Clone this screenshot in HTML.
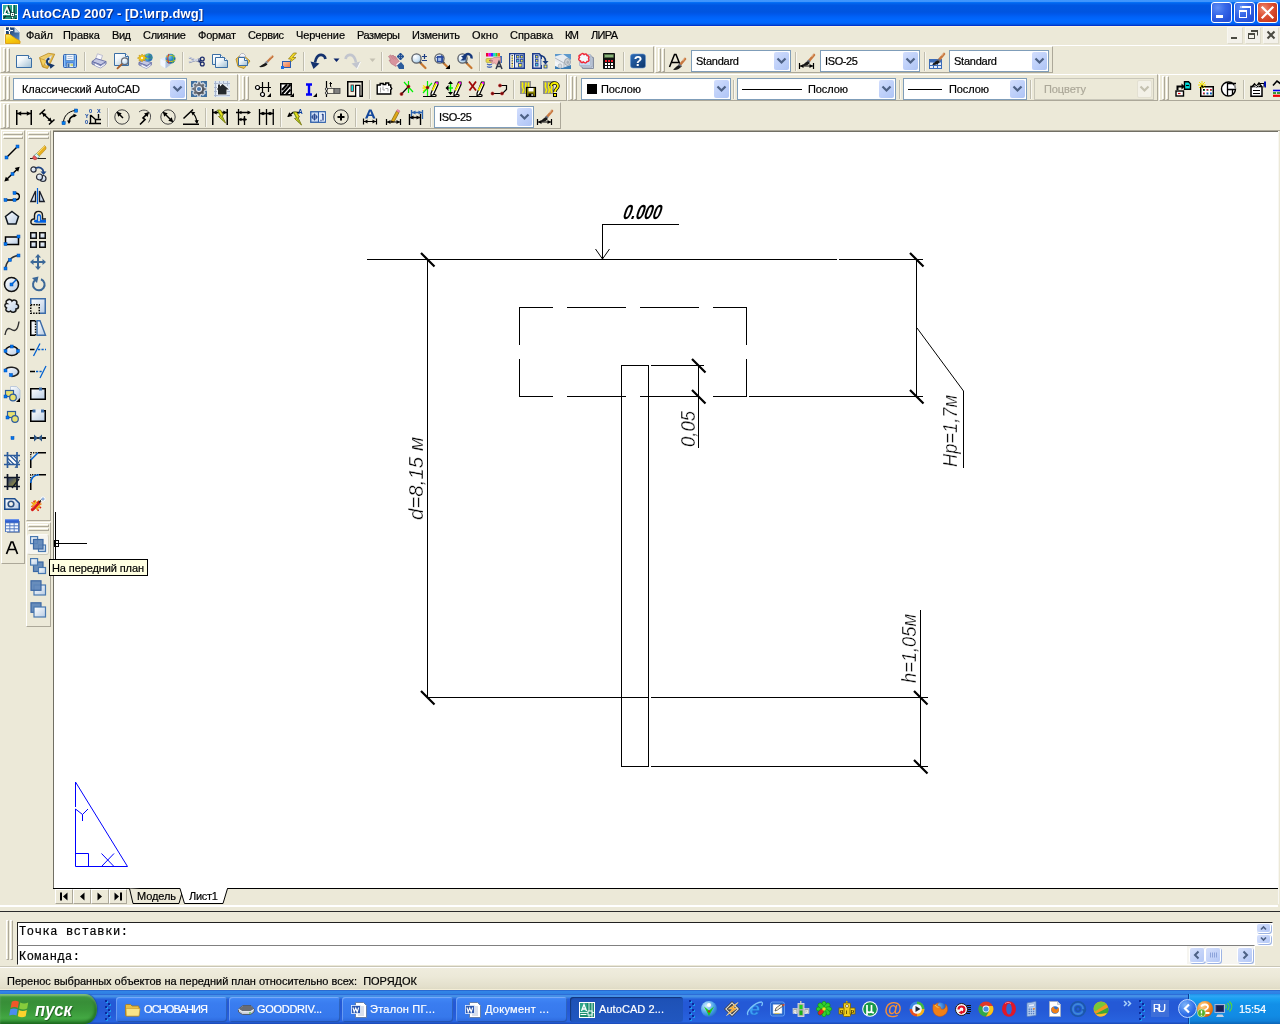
<!DOCTYPE html>
<html lang="ru"><head><meta charset="utf-8"><title>AutoCAD 2007 - [D:\игр.dwg]</title>
<style>
html,body{margin:0;padding:0}
body{width:1280px;height:1024px;overflow:hidden;position:relative;will-change:transform;background:#ECE9D8;font-family:"Liberation Sans",sans-serif;font-size:11px;color:#000}
div,svg.i,span.t,svg.a{position:absolute;box-sizing:border-box}
span.t{white-space:pre;display:block}
svg{overflow:visible}
.tb{border-left:1px solid #fff;border-top:1px solid #fff;border-right:1px solid #ACA899;border-bottom:1px solid #ACA899}
.tbv{border-left:1px solid #fff;border-top:1px solid #fff;border-right:1px solid #ACA899;border-bottom:1px solid #ACA899}
.gr{width:3px;border-left:1px solid #fff;border-top:1px solid #fff;border-right:1px solid #ACA899;border-bottom:1px solid #ACA899}
.gh{height:3px;border-left:1px solid #fff;border-top:1px solid #fff;border-right:1px solid #ACA899;border-bottom:1px solid #ACA899}
.sep{width:2px;border-left:1px solid #C0BDAE;border-right:1px solid #F8F7F1}
.cb{background:#fff;border:1px solid #7F9DB9}
.cbb{border-radius:2px;background:linear-gradient(135deg,#D3DEFD 0%,#C1D2FA 45%,#AEC4F5 100%)}
.cbd{background:#ECE9D8;border:1px solid #C9C7BA}
.cbbd{border-radius:2px;background:#F3F1E8;border:1px solid #E3E0D2}
.tk{border-radius:3px;background:linear-gradient(#4A90F8 0%,#3F84F4 10%,#3A7DF0 25%,#3678EC 80%,#2C68DC 100%);box-shadow:inset 1px 1px 0 rgba(255,255,255,.25),inset -1px -1px 0 rgba(0,0,0,.2)}
.tka{border-radius:3px;background:linear-gradient(#1B4FB8 0%,#1E52B7 15%,#2157C0 100%);box-shadow:inset 1px 1px 1px rgba(0,0,0,.35)}
</style></head><body>
<svg width="0" height="0" style="position:absolute"><defs>
<linearGradient id="gp" x1="0" y1="0" x2="1" y2="1"><stop offset="0" stop-color="#fff"/><stop offset=".35" stop-color="#F2F7FA"/><stop offset="1" stop-color="#9EBDD2"/></linearGradient>
<linearGradient id="gy" x1="0" y1="0" x2="1" y2="1"><stop offset="0" stop-color="#F8E088"/><stop offset="1" stop-color="#D8A020"/></linearGradient>
<radialGradient id="gl" cx=".35" cy=".3" r=".8"><stop offset="0" stop-color="#fff"/><stop offset=".6" stop-color="#CFE4F4"/><stop offset="1" stop-color="#8CB8DC"/></radialGradient>
<radialGradient id="gg" cx=".35" cy=".3" r=".8"><stop offset="0" stop-color="#7CD0F0"/><stop offset=".5" stop-color="#2C84C8"/><stop offset="1" stop-color="#144C8C"/></radialGradient>
<linearGradient id="go" x1="0" y1="0" x2="1" y2="1"><stop offset="0" stop-color="#F8C8B0"/><stop offset="1" stop-color="#F07038"/></linearGradient>
<linearGradient id="gh" x1="0" y1="0" x2="1" y2="1"><stop offset="0" stop-color="#2C6CB8"/><stop offset="1" stop-color="#0C3468"/></linearGradient>
<linearGradient id="gb" x1="0" y1="0" x2="1" y2="1"><stop offset="0" stop-color="#fff"/><stop offset="1" stop-color="#B8CCE4"/></linearGradient>
<linearGradient id="gd" x1="0" y1="0" x2="1" y2="1"><stop offset="0" stop-color="#7C9CCC"/><stop offset="1" stop-color="#4C74B0"/></linearGradient>
</defs></svg>
<div style="left:0px;top:0px;width:1280px;height:26px;background:linear-gradient(to bottom,#4097FD 0px,#3F94FC 1.500px,#0874F8 2.200px,#0068F0 3px,#045FE8 4px,#0057E2 5.500px,#0055E0 12px,#0058EA 14px,#0062F8 17px,#0068FF 20px,#0066FC 23px,#0054E0 24.500px,#0036D0 25.300px,#0030C8 26px)"></div><div style="left:0px;top:26px;width:1280px;height:1px;background:#FAF3DE"></div><svg class="i" style="left:2px;top:4px" width="16" height="16" viewBox="0 0 16 16"><defs><linearGradient id="gteal" x1="0" y1="0" x2="1" y2="1"><stop offset="0" stop-color="#38B8A0"/><stop offset="1" stop-color="#147860"/></linearGradient><linearGradient id="gnavy" x1="0" y1="0" x2="1" y2="1"><stop offset="0" stop-color="#16305C"/><stop offset="1" stop-color="#5890CC"/></linearGradient></defs><rect x=".5" y=".5" width="15" height="15" fill="url(#gteal)" stroke="#fff"/><path d="M10.500 1v14M1 10.500h14" stroke="#fff" stroke-width="1"/><path d="M12.500 1v8M1 12.500h7" stroke="#0C5040" stroke-width=".8"/><path d="M3 9.500L5.500 3.500 8 9.500" fill="none" stroke="#103028" stroke-width="1.600" transform="translate(.8 -.6)"/><path d="M2.500 9.500L5 3.500l2.500 6" fill="none" stroke="#fff" stroke-width="1.500"/><path d="M2 9.500h3" stroke="#fff"/><rect x="8.500" y="8.500" width="4" height="4" fill="#fff" stroke="#0C4034" stroke-width=".8"/><rect x="10" y="10" width="1.200" height="1.200" fill="#0C4034"/><path d="M1.500 14.500l2.500-2.500M9 14.500h1.500M13 14.500h1.500" stroke="#0C3028" stroke-width="1.200"/></svg><span class="t" style="left:22px;top:5px;line-height:17px;font-family:'Liberation Sans',sans-serif;font-size:13px;font-weight:bold;letter-spacing:0.085px;color:#fff;text-shadow:1px 1px 0 #0A2A80;">AutoCAD 2007 - [D:\игр.dwg]</span><div style="left:1211px;top:2px;width:21px;height:21px;border:1px solid #fff;border-radius:3px;background:radial-gradient(circle at 30% 25%,#5F8EF5 0%,#3667E8 40%,#2450D8 80%,#2B5BE0 100%)"></div><div style="left:1234px;top:2px;width:21px;height:21px;border:1px solid #fff;border-radius:3px;background:radial-gradient(circle at 30% 25%,#5F8EF5 0%,#3667E8 40%,#2450D8 80%,#2B5BE0 100%)"></div><div style="left:1257px;top:2px;width:21px;height:21px;border:1px solid #fff;border-radius:3px;background:radial-gradient(circle at 30% 30%,#EC8E72 0%,#E0573A 35%,#C9391C 80%,#B8321A 100%)"></div><svg class="a" style="left:1211px;top:2px" width="68" height="21" viewBox="0 0 68 21"><rect x="5" y="13" width="7" height="3" fill="#fff"/><path d="M31.5 5.5h8v7M29 5h11" fill="none" stroke="#fff" stroke-width="1"/><rect x="31" y="4" width="9" height="2" fill="#fff"/><rect x="28.500" y="9.500" width="7" height="6" fill="none" stroke="#fff"/><rect x="28" y="8" width="8" height="2" fill="#fff"/><path d="M51.500 5.500l10 10M61.500 5.500l-10 10" stroke="#fff" stroke-width="2.200" stroke-linecap="square"/></svg><svg class="i" style="left:5px;top:27px" width="16" height="17" viewBox="0 0 16 17"><rect x="-1" y="0" width="16" height="17" fill="#F8F7F0"/><path d="M1 .5h8.500l5 5v8H1z" fill="url(#gnavy)"/><path d="M9.500 .5l5 5h-5z" fill="#C4D8EC"/><path d="M1 .5h5v6H1z" fill="#1C4478"/><path d="M4.500 0v7M0 3.500h8" stroke="#fff" stroke-width="1.100"/><circle cx="4.500" cy="3.500" r="1.300" fill="#fff"/><circle cx="4.500" cy="3.500" r=".6" fill="#1C4478"/><path d="M.5 7.500H5l2 1.500 1.500 1 2 1.500 2 1 2.500 1.500v2.500H.5z" fill="url(#gyel)" stroke="#D89810" stroke-width=".9"/><defs><linearGradient id="gyel" x1="0" y1="0" x2=".6" y2="1"><stop offset="0" stop-color="#FCEC80"/><stop offset=".5" stop-color="#F8D010"/><stop offset="1" stop-color="#F0B808"/></linearGradient></defs></svg><span class="t" style="left:26px;top:28px;line-height:14px;font-family:'Liberation Sans',sans-serif;font-size:11px;font-weight:normal;letter-spacing:-0.016px;-webkit-text-stroke:.2px;">Файл</span><span class="t" style="left:63px;top:28px;line-height:14px;font-family:'Liberation Sans',sans-serif;font-size:11px;font-weight:normal;letter-spacing:-0.034px;-webkit-text-stroke:.2px;">Правка</span><span class="t" style="left:112px;top:28px;line-height:14px;font-family:'Liberation Sans',sans-serif;font-size:11px;font-weight:normal;letter-spacing:-0.453px;-webkit-text-stroke:.2px;">Вид</span><span class="t" style="left:143px;top:28px;line-height:14px;font-family:'Liberation Sans',sans-serif;font-size:11px;font-weight:normal;letter-spacing:-0.302px;-webkit-text-stroke:.2px;">Слияние</span><span class="t" style="left:198px;top:28px;line-height:14px;font-family:'Liberation Sans',sans-serif;font-size:11px;font-weight:normal;letter-spacing:-0.216px;-webkit-text-stroke:.2px;">Формат</span><span class="t" style="left:248px;top:28px;line-height:14px;font-family:'Liberation Sans',sans-serif;font-size:11px;font-weight:normal;letter-spacing:-0.334px;-webkit-text-stroke:.2px;">Сервис</span><span class="t" style="left:296px;top:28px;line-height:14px;font-family:'Liberation Sans',sans-serif;font-size:11px;font-weight:normal;letter-spacing:-0.074px;-webkit-text-stroke:.2px;">Черчение</span><span class="t" style="left:357px;top:28px;line-height:14px;font-family:'Liberation Sans',sans-serif;font-size:11px;font-weight:normal;letter-spacing:-0.453px;-webkit-text-stroke:.2px;">Размеры</span><span class="t" style="left:412px;top:28px;line-height:14px;font-family:'Liberation Sans',sans-serif;font-size:11px;font-weight:normal;letter-spacing:-0.232px;-webkit-text-stroke:.2px;">Изменить</span><span class="t" style="left:472px;top:28px;line-height:14px;font-family:'Liberation Sans',sans-serif;font-size:11px;font-weight:normal;letter-spacing:0.146px;-webkit-text-stroke:.2px;">Окно</span><span class="t" style="left:510px;top:28px;line-height:14px;font-family:'Liberation Sans',sans-serif;font-size:11px;font-weight:normal;letter-spacing:-0.026px;-webkit-text-stroke:.2px;">Справка</span><span class="t" style="left:565px;top:28px;line-height:14px;font-family:'Liberation Sans',sans-serif;font-size:11px;font-weight:normal;letter-spacing:-1.578px;-webkit-text-stroke:.2px;">КМ</span><span class="t" style="left:591px;top:28px;line-height:14px;font-family:'Liberation Sans',sans-serif;font-size:11px;font-weight:normal;letter-spacing:-0.693px;-webkit-text-stroke:.2px;">ЛИРА</span><div style="left:1227px;top:27px;width:16px;height:17px;background:#F3F1EA;border:1px solid #F8F7F2;border-right-color:#DDDACB;border-bottom-color:#DDDACB"></div><div style="left:1245px;top:27px;width:16px;height:17px;background:#F3F1EA;border:1px solid #F8F7F2;border-right-color:#DDDACB;border-bottom-color:#DDDACB"></div><div style="left:1263px;top:27px;width:16px;height:17px;background:#F3F1EA;border:1px solid #F8F7F2;border-right-color:#DDDACB;border-bottom-color:#DDDACB"></div><svg class="a" style="left:1227px;top:27px" width="52" height="17" viewBox="0 0 52 17"><rect x="4" y="10" width="6" height="2" fill="#4A4A42"/><path d="M24.500 3.500h6v5" fill="none" stroke="#4A4A42"/><rect x="24" y="3" width="7" height="2" fill="#4A4A42"/><rect x="21.500" y="6.500" width="6" height="5" fill="none" stroke="#4A4A42"/><rect x="21" y="6" width="7" height="2" fill="#4A4A42"/><path d="M40.500 4.500l7 7M47.500 4.500l-7 7" stroke="#4A4A42" stroke-width="2"/></svg><div style="left:0px;top:45px;width:1280px;height:1px;background:#fff"></div><div style="left:0px;top:74px;width:1280px;height:1px;background:#fff"></div><div class="tb" style="left:0px;top:46px;width:654px;height:27px;"></div><div class="gr" style="left:3px;top:48px;width:3px;height:24px;"></div><div class="gr" style="left:7px;top:48px;width:3px;height:24px;"></div><svg class="i" style="left:16px;top:53px" width="16" height="16" viewBox="0 0 16 16"><path d="M.5 2.500h12l3 3v9H.5z" fill="url(#gp)" stroke="#3A6EA5"/><path d="M12.500 2.500v3h3" fill="#fff" stroke="#3A6EA5"/></svg><svg class="i" style="left:39px;top:53px" width="16" height="16" viewBox="0 0 16 16"><path d="M.5 4.500L9.500 .3 15.700 1.200 12 9 8.500 15.500 3.500 14z" fill="url(#gy)" stroke="#B8861C" stroke-width=".8"/><path d="M3 8L13 2.500 8 12.500z" fill="#F4F8FC" stroke="#B8C8D8" stroke-width=".5"/><path d="M1 5.500l3 8.500 3.500-6.500z" fill="#F4D060" stroke="#B8861C" stroke-width=".6"/><path d="M10.500 5.500c-3.500 1-3.500 5 .5 7" fill="none" stroke="#17386B" stroke-width="1.900"/><path d="M9.500 10l6.300 2.200-4.300 3.600z" fill="#17386B"/></svg><svg class="i" style="left:62px;top:53px" width="16" height="16" viewBox="0 0 16 16"><rect x="1.500" y="1.500" width="13" height="13" rx="1" fill="#5B9BE8" stroke="#2F5FB0"/><rect x="2.500" y="2.500" width="11" height="11" fill="none" stroke="#8CC0F8" stroke-width="1"/><rect x="4" y="1.500" width="8" height="6" fill="#F4F8FF" stroke="#3A6EA5" stroke-width=".6"/><path d="M5.500 3.500h5M5.500 5.500h5" stroke="#9FB8D8" stroke-width=".8"/><rect x="4.500" y="10" width="7" height="4.500" fill="#E8EEF4" stroke="#2F5FB0" stroke-width=".6"/><rect x="5.500" y="10.500" width="2" height="3.500" fill="#3A6EA5"/><rect x="8.500" y="11" width="2.500" height="2" fill="#C8D878"/></svg><div class="sep" style="left:84px;top:52px;width:2px;height:19px;"></div><svg class="i" style="left:91px;top:53px" width="16" height="16" viewBox="0 0 16 16"><path d="M4.500 6L6.500 .8l5 1.700L10 7z" fill="#F8F8FC" stroke="#A8A8C4" stroke-width=".7"/><path d="M1 8.500L5 5.500l10 3-3 4z" fill="#C4C8E4" stroke="#5C64A0" stroke-width=".8"/><path d="M1 8.500l8.500 3.500v2.500L1 11zM9.500 12l5.500-3.500v2.500l-5.500 3.500z" fill="#A4AAD0" stroke="#5C64A0" stroke-width=".8"/><path d="M3 11l1.500 2 5 2 4.500-3 1-2.500-5.500 3.500-5-2.500z" fill="#fff" stroke="#8088B8" stroke-width=".6"/></svg><svg class="i" style="left:114px;top:53px" width="16" height="16" viewBox="0 0 16 16"><path d="M.5 .5h11l3 3v9H.5z" fill="url(#gp)" stroke="#3A6EA5"/><path d="M11.500 .5v3h3" fill="#fff" stroke="#3A6EA5"/><path d="M8.500 10.500L3.500 15.300" stroke="#A8602C" stroke-width="1.800" stroke-linecap="round"/><circle cx="10.800" cy="8.200" r="3.300" fill="url(#gl)" stroke="#6A6E78" stroke-width="1.200"/></svg><svg class="i" style="left:137px;top:53px" width="16" height="16" viewBox="0 0 16 16"><g transform="translate(1 2) scale(.9)"><path d="M4.500 6L6.500 .8l5 1.700L10 7z" fill="#F8F8FC" stroke="#A8A8C4" stroke-width=".7"/><path d="M1 8.500L5 5.500l10 3-3 4z" fill="#C4C8E4" stroke="#5C64A0" stroke-width=".8"/><path d="M1 8.500l8.500 3.500v2.500L1 11zM9.500 12l5.500-3.500v2.500l-5.500 3.500z" fill="#A4AAD0" stroke="#5C64A0" stroke-width=".8"/><path d="M3 11l1.500 2 5 2 4.500-3 1-2.500-5.500 3.500-5-2.500z" fill="#fff" stroke="#8088B8" stroke-width=".6"/></g><circle cx="11.500" cy="4.500" r="4" fill="#3C8ED8"/><path d="M9 2.500c2-1.500 4-1 5.500 1M8 5c3 1.500 5 1 7.500-.5" fill="none" stroke="#6CD06C" stroke-width="1.200"/><path d="M11.500 .5a4 4 0 0 1 0 8" fill="#1E5C9A" opacity=".55"/><path d="M4 .5l1.200 1.500 2-.8-.4 2 2 1-2 1 .4 2-2-.8L4 8.500 3 6.800l-2 .8.400-2-2-1 2-1-.4-2 2 .8z" transform="translate(1 .5)" fill="#F0C418" stroke="#B88C08" stroke-width=".5"/><circle cx="5" cy="5" r="1" fill="#fff"/></svg><svg class="i" style="left:160px;top:53px" width="16" height="16" viewBox="0 0 16 16"><path d="M.5 6l5-2 5 2v6l-5 3.500-5-3.500z" fill="#E4ECF8"/><path d="M.5 6l5 2.500v7L.5 12z" fill="#F4F8FF"/><path d="M5.500 8.500l5-2.500v6l-5 3.500z" fill="#B4C4DC"/><circle cx="10.500" cy="5.800" r="5" fill="url(#gg)"/><path d="M6 4c3-2 6-2 9 0M5.800 7.500c3 1.500 6.500 1.500 9.500-.5" fill="none" stroke="#E8C818" stroke-width="1"/><path d="M9 1c-1.500 3-1.500 6.500 0 9.500" fill="none" stroke="#D83828" stroke-width="1.100"/><path d="M12.500 1.200c1.500 3 1.500 6 0 9" fill="none" stroke="#58C050" stroke-width="1"/></svg><div class="sep" style="left:182px;top:52px;width:2px;height:19px;"></div><svg class="i" style="left:189px;top:53px" width="16" height="16" viewBox="0 0 16 16"><path d="M0 4.500l12 5M0 9.500l12-4" stroke="#7C86A8" stroke-width="1.800"/><path d="M0 4.300l9 3.500M0 9.200l9-2.800" stroke="#F0F2FA" stroke-width=".8"/><circle cx="13.300" cy="6" r="1.900" fill="none" stroke="#1C2C6C" stroke-width="1.300"/><circle cx="13.300" cy="11" r="1.900" fill="none" stroke="#1C2C6C" stroke-width="1.300"/><path d="M9.500 7.500l2.500 2.200M10 8.800l2-1.800" stroke="#1C2C6C" stroke-width="1.300"/></svg><svg class="i" style="left:212px;top:53px" width="16" height="16" viewBox="0 0 16 16"><path d="M.5 1.500h8l3 3v7H.5z" fill="url(#gp)" stroke="#3A6EA5"/><path d="M8.500 1.500v3h3" fill="#fff" stroke="#3A6EA5"/><path d="M3.500 4.500h9l3 3v7h-12z" fill="url(#gp)" stroke="#3A6EA5"/><path d="M12.500 4.500v3h3" fill="#fff" stroke="#3A6EA5"/></svg><svg class="i" style="left:235px;top:53px" width="16" height="16" viewBox="0 0 16 16"><path d="M1 6l6-5 8 7-6 7.500-6-2z" fill="#E8C458" stroke="#B8902C" stroke-width="1"/><path d="M4.500 2.500l2-2h2l2 2-.5 1.500h-5z" fill="#F4F4F8" stroke="#A0A4B4" stroke-width=".7"/><path d="M3.500 4.500h6l3 3v5h-9z" fill="url(#gp)" stroke="#3A6EA5"/><path d="M9.500 4.500v3h3" fill="#fff" stroke="#3A6EA5"/></svg><svg class="i" style="left:258px;top:53px" width="16" height="16" viewBox="0 0 16 16"><path d="M14.500 3.500L8 10" stroke="#C87840" stroke-width="2.200" stroke-linecap="round"/><path d="M14 2.800L12 4.800" stroke="#E8B088" stroke-width="1"/><path d="M9.500 8.500L7 11" stroke="#8890A0" stroke-width="2.400"/><path d="M8 10c-1 0-3.500 1.500-7 4 3 .5 6.500-.5 8.500-2.500z" fill="#181818"/></svg><svg class="i" style="left:281px;top:53px" width="16" height="16" viewBox="0 0 16 16"><path d="M12.500 0l-5 6h3l-3.500 5 8-6.500h-3.500l4-4.500z" fill="#F4DC28" stroke="#8C7408" stroke-width=".7"/><rect x="1.500" y="8.500" width="8" height="6" fill="url(#go)" stroke="#2C5CB0"/><rect x="0" y="13" width="3" height="3" fill="#1C6CE0"/></svg><div class="sep" style="left:303px;top:52px;width:2px;height:19px;"></div><svg class="i" style="left:310px;top:53px" width="16" height="16" viewBox="0 0 16 16"><path d="M15.500 6c-1-5-7-6-9.500 0l-1 3.500" fill="none" stroke="#14326E" stroke-width="2.600"/><path d="M.5 8.500l9 2-6 5.500z" fill="#14326E"/></svg><svg class="i" style="left:345px;top:53px" width="16" height="16" viewBox="0 0 16 16"><path d="M.5 6c1-5 7-6 9.500 0l1 3.500" fill="none" stroke="#C2C5CE" stroke-width="2.600"/><path d="M15.500 8.500l-9 2 6 5.500z" fill="#C2C5CE"/><path d="M12 16l3.500-7" stroke="#fff" stroke-width="1"/></svg><div class="sep" style="left:381px;top:52px;width:2px;height:19px;"></div><svg class="i" style="left:388px;top:53px" width="16" height="16" viewBox="0 0 16 16"><path d="M12.500 .5v6M9.500 3.500h6M12.500 0l-1.500 1.800h3zM12.500 7l-1.500-1.800h3zM9 3.500l1.800-1.500v3zM16 3.500l-1.800-1.500v3z" fill="#1E4E94" stroke="#1E4E94" stroke-width="1"/><path d="M.5 3.500l2-1.500 1.500 1 1-1 1.500 1.500.5-.5 5 6.500-4 4-5-3-2-3.500 2 0z" fill="#D8949E" stroke="#B4707C" stroke-width=".6"/><path d="M2.500 2.500l3 4M4.500 2.500l3 4M6.500 3.500l2.500 3" stroke="#B4707C" stroke-width=".5"/><path d="M8.500 12l3.500-3" stroke="#F4F4FA" stroke-width="1.300"/><path d="M9 12.500l4-3.500 3 3.500v3.500h-5z" fill="#2C5C9C"/></svg><svg class="i" style="left:411px;top:53px" width="16" height="16" viewBox="0 0 16 16"><path d="M8.500 9l6 6" stroke="#C87830" stroke-width="2.200" stroke-linecap="round"/><path d="M8.300 8.300l2 2" stroke="#50545C" stroke-width="2"/><circle cx="5.500" cy="5.500" r="4.600" fill="url(#gl)" stroke="#5C6068" stroke-width="1.300"/><path d="M11 3.500h5M13.500 1v5M11 7.500h5" stroke="#1E3E84" stroke-width="1.200"/></svg><svg class="i" style="left:434px;top:53px" width="16" height="16" viewBox="0 0 16 16"><path d="M8.500 9l6 6" stroke="#C87830" stroke-width="2.200" stroke-linecap="round"/><path d="M8.300 8.300l2 2" stroke="#50545C" stroke-width="2"/><circle cx="5.500" cy="5.500" r="4.600" fill="url(#gl)" stroke="#5C6068" stroke-width="1.300"/><rect x="3.500" y="3.500" width="5" height="5" fill="#A8C0E8" stroke="#2C4CA0" stroke-width="1.200"/><path d="M2 4.500h8M7.500 2v8" stroke="#2C4CA0" stroke-width=".8"/><path d="M16 11.500v4.500h-4.500z" fill="#000"/></svg><svg class="i" style="left:457px;top:53px" width="16" height="16" viewBox="0 0 16 16"><path d="M8.500 9l6 6" stroke="#C87830" stroke-width="2.200" stroke-linecap="round"/><path d="M8.300 8.300l2 2" stroke="#50545C" stroke-width="2"/><circle cx="5.500" cy="5.500" r="4.600" fill="url(#gl)" stroke="#5C6068" stroke-width="1.300"/><path d="M14.500 5.500c.5-4-3-5.500-6-3.500l-2 2" fill="none" stroke="#16387C" stroke-width="2.400"/><path d="M4 3l5.500-.5-1 5.500z" fill="#16387C"/><path d="M3.500 7.500h4v-4" fill="#16387C"/></svg><div class="sep" style="left:479px;top:52px;width:2px;height:19px;"></div><svg class="i" style="left:486px;top:53px" width="16" height="16" viewBox="0 0 16 16"><rect x="0" y="0" width="2.500" height="3.500" fill="#F00038"/><rect x="2.500" y="0" width="2.500" height="3.500" fill="#E800E8"/><rect x="5" y="0" width="2" height="3.500" fill="#3838F8"/><rect x="7" y="0" width="2.500" height="3.500" fill="#18D8D8"/><rect x="9.500" y="0" width="2" height="3.500" fill="#28D828"/><rect x="11.500" y="0" width="2.500" height="3.500" fill="#F86818"/><rect x="0" y="5.500" width="6" height="4" rx="1" fill="#E8D848" stroke="#A8A030" stroke-width=".6"/><path d="M1 11q2.500 1.500 5 0M1 13.500q2.500 1.500 5 0" fill="none" stroke="#4868B8" stroke-width="1.300"/><rect x="14" y="3" width="2" height="7" fill="#3C6CB8"/><path d="M3 7.500l5-3 6.500 0v5l-4 2-2-1.500-2 .5-1-1.500z" fill="#F0B0B0" stroke="#B87880" stroke-width=".6"/><path d="M3 7.500l4 .5" stroke="#805058" stroke-width=".8"/><path d="M10 16l3-7.500 3 7.500M11 13.500h4" fill="none" stroke="#303848" stroke-width="1.500"/></svg><svg class="i" style="left:509px;top:53px" width="16" height="16" viewBox="0 0 16 16"><rect x=".75" y=".75" width="14.500" height="14.500" fill="#DCE4F0" stroke="#1C3C8C" stroke-width="1.500"/><rect x="1.500" y="1.500" width="3.500" height="13" fill="#fff"/><path d="M3.200 2v12" stroke="#202020" stroke-width="1.200" stroke-dasharray="1.200 1.400"/><path d="M3.200 3.200v12" stroke="#E8D020" stroke-width="1.200" stroke-dasharray="1.200 1.400"/><path d="M5.500 1v14" stroke="#1C3C8C" stroke-width="1"/><rect x="7.5" y="2.5" width="2.5" height="2.5" fill="#E8E048" stroke="#2C4C9C" stroke-width=".9"/><rect x="11.5" y="2.5" width="2.5" height="2.5" fill="#E8E048" stroke="#2C4C9C" stroke-width=".9"/><rect x="7.5" y="6.5" width="2.5" height="2.5" fill="#48D8D8" stroke="#2C4C9C" stroke-width=".9"/><rect x="11.5" y="6.5" width="2.5" height="2.5" fill="#E8E048" stroke="#2C4C9C" stroke-width=".9"/><rect x="9.5" y="10.5" width="3.5" height="3.5" fill="#F0E848" stroke="#2C4C9C" stroke-width=".9"/></svg><svg class="i" style="left:532px;top:53px" width="16" height="16" viewBox="0 0 16 16"><path d="M.75 .75h6.500l2 2v12.500h-8.500z" fill="#DCE4F0" stroke="#1C3C8C" stroke-width="1.500"/><rect x="3.5" y="2.5" width="2.5" height="2.5" fill="#E8E048" stroke="#2C4C9C" stroke-width=".9"/><rect x="3.5" y="6.5" width="2.5" height="2.5" fill="#E8E048" stroke="#2C4C9C" stroke-width=".9"/><rect x="3.5" y="10.5" width="2.5" height="2.5" fill="#48D8D8" stroke="#2C4C9C" stroke-width=".9"/><path d="M9.500 6v6" stroke="#A8B8D0" stroke-width="1"/><path d="M7.500 2.500c4 0 6 2 6 6" fill="none" stroke="#16387C" stroke-width="1.600"/><path d="M10.500 8h6l-3 3.500z" fill="#16387C"/><rect x="12" y="12" width="3" height="3" fill="#F0E848" stroke="#2C4C9C" stroke-width=".9"/></svg><svg class="i" style="left:555px;top:53px" width="16" height="16" viewBox="0 0 16 16"><rect x="0" y="1" width="16" height="15" fill="#5C98CC"/><path d="M0 13l16-3v6H0z" fill="#3C7CB4"/><path d="M0 3.500L8 1l8 6v5l-9 3-7-3z" fill="#E8ECF0"/><path d="M0 5l9 5v4" fill="none" stroke="#B0B8C0" stroke-width="1"/><ellipse cx="12.500" cy="9" rx="3" ry="3.500" fill="#D0D4D8" stroke="#9098A0" stroke-width=".8"/><ellipse cx="12.800" cy="9.200" rx="1.300" ry="1.700" fill="#A8B0B8"/><path d="M0 8l6 3.500v4L0 13z" fill="#F4F6F8"/><ellipse cx="5" cy="13" rx="1.800" ry="2.200" fill="#D8DCE0" stroke="#A0A8B0" stroke-width=".6"/></svg><svg class="i" style="left:578px;top:53px" width="16" height="16" viewBox="0 0 16 16"><path d="M4.500 4.500h11v11h-11z" fill="#C8D4E8" stroke="#8890A0" stroke-width="1"/><path d="M3 3h11v11h-11z" fill="#D8E4F4" stroke="#98A0B0" stroke-width="1"/><path d="M1.500 1.500h11v11h-11z" fill="#C4DCF4" stroke="#A8B4C8" stroke-width=".8"/><path d="M2.500 2q1.500-2.500 3.500-.5 2.500-1.500 3 1 3 .5 1.500 3 1.500 3-1.500 3-1 2.500-3.500.5-2.500 1.500-3-1-3-1-1-3.500-1.500-2 1-2.500z" fill="#F4F8FC" stroke="#F02838" stroke-width="1.500"/></svg><svg class="i" style="left:601px;top:53px" width="16" height="16" viewBox="0 0 16 16"><rect x="2" y="0" width="12" height="16" rx=".8" fill="#101010"/><rect x="3.500" y="1.500" width="9" height="3" fill="#88B078" stroke="#486838" stroke-width=".5"/><rect x="4" y="7" width="2" height="2" fill="#F01828"/><rect x="7" y="7" width="2" height="2" fill="#F01828"/><rect x="10" y="7" width="2" height="2" fill="#F01828"/><rect x="4" y="10" width="2" height="2" fill="#fff"/><rect x="4" y="13" width="2" height="2" fill="#fff"/><rect x="7" y="10" width="2" height="2" fill="#fff"/><rect x="7" y="13" width="2" height="2" fill="#fff"/><rect x="10" y="10" width="2" height="2" fill="#fff"/><rect x="10" y="13" width="2" height="2" fill="#fff"/></svg><div class="sep" style="left:623px;top:52px;width:2px;height:19px;"></div><svg class="i" style="left:630px;top:53px" width="16" height="16" viewBox="0 0 16 16"><rect x=".5" y="1" width="15" height="14" rx="2.500" fill="url(#gh)" stroke="#6C98D0" stroke-width=".6"/><text x="8" y="13.200" text-anchor="middle" font-family="'Liberation Sans',sans-serif" font-weight="bold" font-size="14" fill="#fff">?</text></svg><svg class="a" style="left:333px;top:58px" width="8" height="5" viewBox="0 0 8 5"><path d="M0.500 0.500h6l-3 3.500z" fill="#0A246A"/></svg><svg class="a" style="left:369px;top:58px" width="8" height="5" viewBox="0 0 8 5"><path d="M0.500 0.500h6l-3 3.500z" fill="#C5C2B3"/></svg><div class="tb" style="left:655px;top:46px;width:398px;height:27px;"></div><div class="gr" style="left:658px;top:48px;width:3px;height:24px;"></div><div class="gr" style="left:662px;top:48px;width:3px;height:24px;"></div><svg class="i" style="left:669px;top:53px" width="16" height="16" viewBox="0 0 16 16"><path d="M.5 14L5.500 1.500h1.500L12 14M3 9.500h6.500" stroke="#000" stroke-width="1.500" fill="none"/><g transform="translate(1 3)"><path d="M15 3L9.500 9.500" stroke="#C87840" stroke-width="2.600" stroke-linecap="round"/><path d="M14.500 2.500L12.500 5" stroke="#E8B890" stroke-width="1"/><path d="M10.500 8.500L8.500 10.500" stroke="#687080" stroke-width="2.800"/><path d="M9.300 9.500c-1.300-.3-3.300 1-6.300 4.300 3 .6 6-.5 7.800-2.500z" fill="#181818"/></g></svg><div class="cb" style="left:691px;top:50px;width:100px;height:22px;"></div><div class="cbb" style="left:774px;top:52px;width:15px;height:18px;"></div><svg class="a" style="left:774px;top:52px" width="15" height="18" viewBox="0 0 15 18"><path d="M3.500 6.500l4 4l4-4" fill="none" stroke="#4D6185" stroke-width="2.200"/></svg><span class="t" style="left:696px;top:54px;line-height:14px;font-family:'Liberation Sans',sans-serif;font-size:11px;font-weight:normal;letter-spacing:-0.237px;-webkit-text-stroke:.2px;">Standard</span><div class="sep" style="left:795px;top:52px;width:2px;height:19px;"></div><svg class="i" style="left:799px;top:53px" width="16" height="16" viewBox="0 0 16 16"><path d="M0.5 10v6M14.5 10v6M1 13H14" stroke="#000" fill="none" stroke-width="1.200"/><path d="M1.00 13.00L4.50 11.07L4.50 14.93ZM14.00 13.00L10.50 14.93L10.50 11.07Z" fill="#000"/><g transform="translate(0 -1)"><path d="M15 3L9.500 9.500" stroke="#C87840" stroke-width="2.600" stroke-linecap="round"/><path d="M14.500 2.500L12.500 5" stroke="#E8B890" stroke-width="1"/><path d="M10.500 8.500L8.500 10.500" stroke="#687080" stroke-width="2.800"/><path d="M9.300 9.500c-1.300-.3-3.300 1-6.300 4.300 3 .6 6-.5 7.800-2.500z" fill="#181818"/></g></svg><div class="cb" style="left:820px;top:50px;width:100px;height:22px;"></div><div class="cbb" style="left:903px;top:52px;width:15px;height:18px;"></div><svg class="a" style="left:903px;top:52px" width="15" height="18" viewBox="0 0 15 18"><path d="M3.500 6.500l4 4l4-4" fill="none" stroke="#4D6185" stroke-width="2.200"/></svg><span class="t" style="left:825px;top:54px;line-height:14px;font-family:'Liberation Sans',sans-serif;font-size:11px;font-weight:normal;letter-spacing:-0.372px;-webkit-text-stroke:.2px;">ISO-25</span><div class="sep" style="left:924px;top:52px;width:2px;height:19px;"></div><svg class="i" style="left:928px;top:53px" width="16" height="16" viewBox="0 0 16 16"><rect x="1.500" y="6.500" width="12" height="9" fill="#E4ECF8" stroke="#3C6CB8"/><rect x="1.500" y="6.500" width="12" height="3" fill="#3C6CB8"/><path d="M1.500 12.500h12M5.500 9.500v6M9.500 9.500v6" stroke="#3C6CB8" stroke-width="1"/><g transform="translate(1 -2)"><path d="M15 3L9.500 9.500" stroke="#C87840" stroke-width="2.600" stroke-linecap="round"/><path d="M14.500 2.500L12.500 5" stroke="#E8B890" stroke-width="1"/><path d="M10.500 8.500L8.500 10.500" stroke="#687080" stroke-width="2.800"/><path d="M9.300 9.500c-1.300-.3-3.300 1-6.300 4.300 3 .6 6-.5 7.800-2.500z" fill="#181818"/></g></svg><div class="cb" style="left:949px;top:50px;width:100px;height:22px;"></div><div class="cbb" style="left:1032px;top:52px;width:15px;height:18px;"></div><svg class="a" style="left:1032px;top:52px" width="15" height="18" viewBox="0 0 15 18"><path d="M3.500 6.500l4 4l4-4" fill="none" stroke="#4D6185" stroke-width="2.200"/></svg><span class="t" style="left:954px;top:54px;line-height:14px;font-family:'Liberation Sans',sans-serif;font-size:11px;font-weight:normal;letter-spacing:-0.237px;-webkit-text-stroke:.2px;">Standard</span><div class="tb" style="left:0px;top:74px;width:238px;height:27px;"></div><div class="gr" style="left:3px;top:76px;width:3px;height:24px;"></div><div class="gr" style="left:7px;top:76px;width:3px;height:24px;"></div><div class="cb" style="left:13px;top:78px;width:174px;height:22px;"></div><div class="cbb" style="left:170px;top:80px;width:15px;height:18px;"></div><svg class="a" style="left:170px;top:80px" width="15" height="18" viewBox="0 0 15 18"><path d="M3.500 6.500l4 4l4-4" fill="none" stroke="#4D6185" stroke-width="2.200"/></svg><span class="t" style="left:22px;top:82px;line-height:14px;font-family:'Liberation Sans',sans-serif;font-size:11px;font-weight:normal;letter-spacing:-0.076px;-webkit-text-stroke:.2px;">Классический AutoCAD</span><svg class="i" style="left:191px;top:81px" width="16" height="16" viewBox="0 0 16 16"><rect x="0" y="0" width="16" height="16" fill="#3F6E9E"/><rect x="5.9" y="0.3" width="4.2" height="7.7" fill="#E4ECF4" transform="rotate(0 8 8)"/><rect x="5.9" y="0.3" width="4.2" height="7.7" fill="#E4ECF4" transform="rotate(45 8 8)"/><rect x="5.9" y="0.3" width="4.2" height="7.7" fill="#E4ECF4" transform="rotate(90 8 8)"/><rect x="5.9" y="0.3" width="4.2" height="7.7" fill="#E4ECF4" transform="rotate(135 8 8)"/><rect x="5.9" y="0.3" width="4.2" height="7.7" fill="#E4ECF4" transform="rotate(180 8 8)"/><rect x="5.9" y="0.3" width="4.2" height="7.7" fill="#E4ECF4" transform="rotate(225 8 8)"/><rect x="5.9" y="0.3" width="4.2" height="7.7" fill="#E4ECF4" transform="rotate(270 8 8)"/><rect x="5.9" y="0.3" width="4.2" height="7.7" fill="#E4ECF4" transform="rotate(315 8 8)"/><circle cx="8" cy="8" r="6.2" fill="#E4ECF4"/><defs><linearGradient id="ggear" x1="0" y1="0" x2="1" y2="1"><stop offset="0" stop-color="#8C9098"/><stop offset="1" stop-color="#3C4048"/></linearGradient></defs><rect x="6.7" y="1.2" width="2.6" height="6.8" fill="url(#ggear)" transform="rotate(0 8 8)"/><rect x="6.7" y="1.2" width="2.6" height="6.8" fill="url(#ggear)" transform="rotate(45 8 8)"/><rect x="6.7" y="1.2" width="2.6" height="6.8" fill="url(#ggear)" transform="rotate(90 8 8)"/><rect x="6.7" y="1.2" width="2.6" height="6.8" fill="url(#ggear)" transform="rotate(135 8 8)"/><rect x="6.7" y="1.2" width="2.6" height="6.8" fill="url(#ggear)" transform="rotate(180 8 8)"/><rect x="6.7" y="1.2" width="2.6" height="6.8" fill="url(#ggear)" transform="rotate(225 8 8)"/><rect x="6.7" y="1.2" width="2.6" height="6.8" fill="url(#ggear)" transform="rotate(270 8 8)"/><rect x="6.7" y="1.2" width="2.6" height="6.8" fill="url(#ggear)" transform="rotate(315 8 8)"/><circle cx="8" cy="8" r="5.2" fill="url(#ggear)"/><circle cx="8" cy="8" r="3" fill="#F4F6FA"/><circle cx="8" cy="8" r="2.100" fill="#4C7CB0"/></svg><svg class="i" style="left:214px;top:81px" width="16" height="16" viewBox="0 0 16 16"><rect x="0" y="0" width="16" height="16" fill="#DCE6F2"/><path d="M1.500 0v16M5.500 0v3M9.500 0v3M13.500 0v5M0 2.500h16M0 6.500h3M0 10.500h3M0 14.500h16M13 10.500h3" stroke="#A4B0C8" stroke-width=".9"/><path d="M4 13.500V8.500H2.500L4 7V3.500h2v2L8.500 3l6.500 5.500h-2.500v5z" fill="#24282C" stroke="#fff" stroke-width="1.300" stroke-linejoin="round"/><path d="M4 13.500V8.500H2.500L4 7V3.500h2v2L8.500 3l6.500 5.500h-2.500v5z" fill="#24282C"/></svg><div class="tb" style="left:239px;top:74px;width:328px;height:27px;"></div><div class="gr" style="left:242px;top:76px;width:3px;height:24px;"></div><div class="gr" style="left:246px;top:76px;width:3px;height:24px;"></div><svg class="i" style="left:255px;top:81px" width="16" height="16" viewBox="0 0 16 16"><path d="M7.500 1v11M13.500 1v10M4 6.500h12" stroke="#000" fill="none" stroke-width="1.200"/><circle cx="2.500" cy="6.500" r="2" fill="#fff" stroke="#000" stroke-width="1.200"/><circle cx="7.500" cy="13.500" r="2" fill="#fff" stroke="#000" stroke-width="1.200"/><path d="M16 12v4h-4z" fill="#000"/></svg><svg class="i" style="left:278px;top:81px" width="16" height="16" viewBox="0 0 16 16"><rect x="2.750" y="2.750" width="10.500" height="11" fill="#fff" stroke="#000" stroke-width="1.500"/><path d="M4 9l5-5.500M4 13l8.500-9.500M8 13.500l4.500-5" stroke="#000" stroke-width="2"/><path d="M16 12v4h-4z" fill="#000"/></svg><svg class="i" style="left:301px;top:81px" width="16" height="16" viewBox="0 0 16 16"><path d="M5 3.500h6M5 13.500h6M8 3.500v10" stroke="#0000F8" stroke-width="2.400" fill="none"/><path d="M16 12v4h-4z" fill="#000"/></svg><svg class="i" style="left:324px;top:81px" width="16" height="16" viewBox="0 0 16 16"><path d="M2.500 0v16" stroke="#000" fill="none" stroke-width="1.200"/><path d="M6.500 1v4.500l1 .5M5.500 2.500h2.500" stroke="#000" fill="none" stroke-width="1"/><rect x="3" y="7.500" width="7" height="5" fill="#F4F0E0" stroke="#404040" stroke-width=".8"/><rect x="10" y="7.500" width="6" height="5" fill="#808080" stroke="#404040" stroke-width=".8"/><circle cx="2.500" cy="8" r="1.200" fill="#fff" stroke="#000" stroke-width=".7"/><circle cx="2.500" cy="12" r="1.200" fill="#fff" stroke="#000" stroke-width=".7"/></svg><svg class="i" style="left:347px;top:81px" width="16" height="16" viewBox="0 0 16 16"><path d="M.75 15.250V.75h14.500v14.500h-2.500V4.500h-4v10.750z" fill="#F4F0E0" stroke="#000" stroke-width="1.500"/><rect x="9.500" y="5" width="2.800" height="11" fill="#fff"/><rect x="4" y="4" width="2.500" height="6.500" fill="#00E8E8" stroke="#681818" stroke-width=".8"/></svg><div class="sep" style="left:369px;top:80px;width:2px;height:19px;"></div><svg class="i" style="left:376px;top:81px" width="16" height="16" viewBox="0 0 16 16"><path d="M1.200 4h3v-1.500h3v1h2.500v-1.500h3v2h2v2l1 1.500-1 1.500v4H1.200z" fill="#fff" stroke="#000" stroke-width="1.400"/><path d="M4.500 6.500v5M7 5.500v3.500h2M9.500 7.500h2.500v3" stroke="#A8A8A8" stroke-width="1" fill="none"/></svg><svg class="i" style="left:399px;top:81px" width="16" height="16" viewBox="0 0 16 16"><path d="M9.500 0v12M5 1l9 10" stroke="#00F000" stroke-width="1.200"/><path d="M2.500 13L9.500 5.500" stroke="#000" stroke-width="1.200"/><circle cx="2.5" cy="13" r="1.500" fill="#700808" stroke="#C02020" stroke-width=".6"/><circle cx="9.5" cy="5.5" r="1.500" fill="#700808" stroke="#C02020" stroke-width=".6"/></svg><svg class="i" style="left:422px;top:81px" width="16" height="16" viewBox="0 0 16 16"><path d="M1 4.500l3 2-3.500.5 3.500 1-3 2" stroke="#F0E800" stroke-width="1.200" fill="none"/><path d="M5.500 0v15M1 12L10 2" stroke="#00F000" stroke-width="1.200"/><path d="M9 12.500L13.500 1h2.500v2.500L11.500 13.500l-2.500 1z" fill="#fff" stroke="#000" stroke-width="1.200"/><path d="M10.500 9.500l3.500-7" stroke="#F0E800" stroke-width="1.800"/><path d="M14 1.500h1.500v1.500z" fill="#F000F0" stroke="#F000F0"/><path d="M1 15.500h12c1.500 0 1.500-2 0-2h-2" fill="none" stroke="#000" stroke-width="1.200"/><circle cx="5.5" cy="6.5" r="1.500" fill="#700808" stroke="#C02020" stroke-width=".6"/></svg><svg class="i" style="left:445px;top:81px" width="16" height="16" viewBox="0 0 16 16"><path d="M5.500 1v12" stroke="#00F000" stroke-width="1.400"/><path d="M3 7h5" stroke="#00F000" stroke-width="1.400"/><path d="M5.500 0l2.500 3h-5zM5.500 14l2.500-3h-5zM.5 7l3-3v6z" fill="#000"/><path d="M9 12.500L13.500 1h2.500v2.500L11.500 13.500l-2.500 1z" fill="#fff" stroke="#000" stroke-width="1.200"/><path d="M10.500 9.500l3.500-7" stroke="#F0E800" stroke-width="1.800"/><path d="M14 1.500h1.500v1.500z" fill="#F000F0" stroke="#F000F0"/><path d="M1 15.500h12c1.500 0 1.500-2 0-2h-2" fill="none" stroke="#000" stroke-width="1.200"/></svg><svg class="i" style="left:468px;top:81px" width="16" height="16" viewBox="0 0 16 16"><path d="M1 .5l7 9M8 .5l-6.500 9" stroke="#A00808" stroke-width="1.800"/><path d="M9 12.500L13.500 1h2.500v2.500L11.500 13.500l-2.500 1z" fill="#fff" stroke="#000" stroke-width="1.200"/><path d="M10.500 9.500l3.500-7" stroke="#F0E800" stroke-width="1.800"/><path d="M14 1.500h1.500v1.500z" fill="#F000F0" stroke="#F000F0"/><path d="M1 15.500h12c1.500 0 1.500-2 0-2h-2" fill="none" stroke="#000" stroke-width="1.200"/></svg><svg class="i" style="left:491px;top:81px" width="16" height="16" viewBox="0 0 16 16"><path d="M2.500 12.500h10l4-4v-4h-7" fill="none" stroke="#000" stroke-width="1.200" transform="translate(-1 0)"/><circle cx="1.5" cy="12.5" r="1.500" fill="#700808" stroke="#C02020" stroke-width=".6"/><circle cx="11" cy="12.5" r="1.500" fill="#700808" stroke="#C02020" stroke-width=".6"/><circle cx="9" cy="4.5" r="1.500" fill="#700808" stroke="#C02020" stroke-width=".6"/></svg><div class="sep" style="left:513px;top:80px;width:2px;height:19px;"></div><svg class="i" style="left:520px;top:81px" width="16" height="16" viewBox="0 0 16 16"><rect x="0" y="0" width="11" height="13" fill="#909090"/><path d="M2 1.500c2 2-1 4 1 6s-1 3 0 4.500M5.500 1.500c1.500 2-1 4 .5 6s-1 3 0 4.500M9 1.500c-2 2 1 4-.5 6s1 3 0 4.500" fill="none" stroke="#F8F000" stroke-width="1.600"/><rect x="6.500" y="6.500" width="9" height="9" fill="#908800" stroke="#000" stroke-width="1.200"/><rect x="8.500" y="7" width="5" height="3.500" fill="#fff"/><rect x="8.500" y="12.500" width="5" height="3" fill="#000"/><rect x="11.500" y="13" width="1.200" height="2" fill="#fff"/></svg><svg class="i" style="left:543px;top:81px" width="16" height="16" viewBox="0 0 16 16"><rect x="0" y="0" width="11" height="13" fill="#909090"/><path d="M2 1.500c2 2-1 4 1 6s-1 3 0 4.500M5.500 1.500c1.500 2-1 4 .5 6s-1 3 0 4.500M9 1.500c-2 2 1 4-.5 6s1 3 0 4.500" fill="none" stroke="#F8F000" stroke-width="1.600"/><path d="M8 5c0-4 7-4 7 0 0 3-3 2.500-3 6" fill="none" stroke="#000" stroke-width="3.400"/><path d="M8 5c0-4 7-4 7 0 0 3-3 2.500-3 6" fill="none" stroke="#F8F000" stroke-width="1.800"/><rect x="10.500" y="12.500" width="3" height="3" fill="#F8F000" stroke="#000" stroke-width="1"/></svg><div class="tb" style="left:567px;top:74px;width:591px;height:27px;"></div><div class="gr" style="left:570px;top:76px;width:3px;height:24px;"></div><div class="gr" style="left:574px;top:76px;width:3px;height:24px;"></div><div class="cb" style="left:581px;top:78px;width:150px;height:22px;"></div><div class="cbb" style="left:714px;top:80px;width:15px;height:18px;"></div><svg class="a" style="left:714px;top:80px" width="15" height="18" viewBox="0 0 15 18"><path d="M3.500 6.500l4 4l4-4" fill="none" stroke="#4D6185" stroke-width="2.200"/></svg><span class="t" style="left:601px;top:82px;line-height:14px;font-family:'Liberation Sans',sans-serif;font-size:11px;font-weight:normal;letter-spacing:-0.087px;-webkit-text-stroke:.2px;">Послою</span><div style="left:587px;top:84px;width:10px;height:10px;background:#000"></div><div class="sep" style="left:733px;top:80px;width:2px;height:19px;"></div><div class="cb" style="left:737px;top:78px;width:159px;height:22px;"></div><div class="cbb" style="left:879px;top:80px;width:15px;height:18px;"></div><svg class="a" style="left:879px;top:80px" width="15" height="18" viewBox="0 0 15 18"><path d="M3.500 6.500l4 4l4-4" fill="none" stroke="#4D6185" stroke-width="2.200"/></svg><span class="t" style="left:808px;top:82px;line-height:14px;font-family:'Liberation Sans',sans-serif;font-size:11px;font-weight:normal;letter-spacing:-0.087px;-webkit-text-stroke:.2px;">Послою</span><div style="left:742px;top:89px;width:60px;height:1px;background:#000"></div><div class="sep" style="left:899px;top:80px;width:2px;height:19px;"></div><div class="cb" style="left:903px;top:78px;width:124px;height:22px;"></div><div class="cbb" style="left:1010px;top:80px;width:15px;height:18px;"></div><svg class="a" style="left:1010px;top:80px" width="15" height="18" viewBox="0 0 15 18"><path d="M3.500 6.500l4 4l4-4" fill="none" stroke="#4D6185" stroke-width="2.200"/></svg><span class="t" style="left:949px;top:82px;line-height:14px;font-family:'Liberation Sans',sans-serif;font-size:11px;font-weight:normal;letter-spacing:-0.087px;-webkit-text-stroke:.2px;">Послою</span><div style="left:908px;top:89px;width:34px;height:1px;background:#000"></div><div class="sep" style="left:1030px;top:80px;width:2px;height:19px;"></div><div class="cbd" style="left:1034px;top:78px;width:120px;height:22px;"></div><div class="cbbd" style="left:1137px;top:80px;width:15px;height:18px;"></div><svg class="a" style="left:1137px;top:80px" width="15" height="18" viewBox="0 0 15 18"><path d="M3.500 6.500l4 4l4-4" fill="none" stroke="#C4C1B0" stroke-width="2.200"/></svg><span class="t" style="left:1044px;top:82px;line-height:14px;font-family:'Liberation Sans',sans-serif;font-size:11px;font-weight:normal;letter-spacing:-0.078px;color:#ACA899;-webkit-text-stroke:.2px;">Поцвету</span><div class="tb" style="left:1159px;top:74px;width:132px;height:27px;"></div><div class="gr" style="left:1162px;top:76px;width:3px;height:24px;"></div><div class="gr" style="left:1166px;top:76px;width:3px;height:24px;"></div><svg class="i" style="left:1175px;top:81px" width="16" height="16" viewBox="0 0 16 16"><rect x="1" y="10" width="7.500" height="5" fill="#fff" stroke="#000" stroke-width="1.400"/><path d="M3 12.500h2.500" stroke="#E00000" stroke-width="1.200"/><path d="M2.500 9V5.500H7" fill="none" stroke="#000" stroke-width="2"/><path d="M6.500 2.500l3.500 3-3.500 3z" fill="#000"/><path d="M9.500 .75h4l2 2v5.500h-6z" fill="#00E0E0" stroke="#000" stroke-width="1.400"/><path d="M11 4.500h3" stroke="#000" stroke-width="1.200"/></svg><svg class="i" style="left:1198px;top:81px" width="16" height="16" viewBox="0 0 16 16"><rect x="2.750" y="5.750" width="12.500" height="9.500" fill="#fff" stroke="#000" stroke-width="1.500"/><rect x="5.0" y="8.0" width="1.800" height="1.800" fill="#000"/><rect x="8.5" y="8.0" width="1.800" height="1.800" fill="#E00030"/><rect x="12.0" y="8.0" width="1.800" height="1.800" fill="#E00030"/><rect x="5.0" y="11.5" width="1.800" height="1.800" fill="#E00030"/><rect x="8.5" y="11.5" width="1.800" height="1.800" fill="#0030E0"/><rect x="12.0" y="11.5" width="1.800" height="1.800" fill="#0030E0"/><rect x="5.8" y="8.8" width="1" height="1" fill="#00B040"/><rect x="5.8" y="12.3" width="1" height="1" fill="#00B040"/><rect x="9.3" y="8.8" width="1" height="1" fill="#00B040"/><rect x="9.3" y="12.3" width="1" height="1" fill="#00B040"/><rect x="12.8" y="8.8" width="1" height="1" fill="#00B040"/><rect x="12.8" y="12.3" width="1" height="1" fill="#00B040"/><path d="M4 0v8M0 4h8M1 1l6 6M7 1l-6 6" stroke="#F0E000" stroke-width="1"/><path d="M3.500 4.500l2 2" stroke="#000" stroke-width="1.600"/></svg><svg class="i" style="left:1221px;top:81px" width="16" height="16" viewBox="0 0 16 16"><circle cx="7.500" cy="8" r="7" fill="#fff" stroke="#000" stroke-width="1.400"/><path d="M6.500 15V2.500H15M6.500 8.500H15M11.500 8.500V14" fill="none" stroke="#000" stroke-width="1.300"/><path d="M14 3.500v4.500" stroke="#B0B0B0" stroke-width="1.500"/></svg><div class="sep" style="left:1243px;top:80px;width:2px;height:19px;"></div><svg class="i" style="left:1250px;top:81px" width="16" height="16" viewBox="0 0 16 16"><path d="M1 15.250V5.500h11v9.750z" fill="#fff" stroke="#000" stroke-width="1.500"/><path d="M3 9.500h7M3 12.500h7" stroke="#000" stroke-width="1.200"/><path d="M2 6l2.500-3 2 2.500 2.500-3.500 2 2.500 2-2" fill="none" stroke="#000" stroke-width="1.600"/><path d="M4 5.500l1-1 1 1.500 1.500-1.500 1 1" fill="none" stroke="#fff" stroke-width=".8"/><path d="M10 2.500h4v4" fill="#fff" stroke="#000" stroke-width="1"/><path d="M14 .5h2v6.500l-2-2z" fill="#0010B0"/></svg><svg class="i" style="left:1273px;top:81px" width="16" height="16" viewBox="0 0 16 16"><path d="M0 4.500l4-4.500 4 3" fill="none" stroke="#000" stroke-width="1.600"/><path d="M0 9.500h16" stroke="#0000F0" stroke-width="1.600"/><path d="M0 12h16" stroke="#008000" stroke-width="1.400" stroke-dasharray="3 1"/><path d="M0 14.800h16" stroke="#F00000" stroke-width="2.200"/></svg><div class="tb" style="left:0px;top:102px;width:561px;height:27px;"></div><div class="gr" style="left:3px;top:104px;width:3px;height:24px;"></div><div class="gr" style="left:7px;top:104px;width:3px;height:24px;"></div><svg class="i" style="left:16px;top:109px" width="16" height="16" viewBox="0 0 16 16"><path d="M.75 1v15M15.250 1v15M1 4.500h14" stroke="#000" fill="none" stroke-width="1.500"/><path d="M1.20 4.50L5.20 2.30L5.20 6.70ZM14.80 4.50L10.80 6.70L10.80 2.30Z" fill="#000"/></svg><svg class="i" style="left:39px;top:109px" width="16" height="16" viewBox="0 0 16 16"><path d="M3 3.500L13 13M.5 5.500L6 .5M10 15.500l5.500-5" stroke="#000" fill="none" stroke-width="1.500"/><path d="M3.20 3.70L7.58 4.97L4.47 8.08ZM12.80 12.80L8.42 11.53L11.53 8.42Z" fill="#000"/></svg><svg class="i" style="left:62px;top:109px" width="16" height="16" viewBox="0 0 16 16"><path d="M1.500 13C2 7 6 2.500 13 1.500" stroke="#000" fill="none" stroke="#404040" stroke-width="1"/><path d="M7 13.500C7 9.500 9.500 7 13.500 6.500" stroke="#000" fill="none" stroke-width="1.600"/><path d="M7.00 15.00L5.07 11.50L8.93 11.50ZM15.00 6.30L11.71 8.56L11.33 4.73Z" fill="#000"/><rect x="0" y="12.500" width="3.200" height="3.200" fill="#0080F0" stroke="#0040A0" stroke-width=".5"/><rect x="12.500" y="0" width="3.200" height="3.200" fill="#0080F0" stroke="#0040A0" stroke-width=".5"/></svg><svg class="i" style="left:85px;top:109px" width="16" height="16" viewBox="0 0 16 16"><text x="0" y="8.500" font-family="'Liberation Sans',sans-serif" font-weight="bold" font-size="5.500" fill="#0038A0">Y</text><text x="4" y="4" font-family="'Liberation Sans',sans-serif" font-weight="bold" font-size="5.500" fill="#0038A0">0</text><text x="12" y="4" font-family="'Liberation Sans',sans-serif" font-weight="bold" font-size="5.500" fill="#0038A0">X</text><text x="0" y="15" font-family="'Liberation Sans',sans-serif" font-weight="bold" font-size="5.500" fill="#0038A0">0</text><path d="M5.500 6v8.500M4 14.500h12M5.500 6l5.500 5M10.500 10v5M13.500 5v4.500M10.500 10.500h5.500" stroke="#000" fill="none" stroke-width="1.400"/></svg><div class="sep" style="left:107px;top:108px;width:2px;height:19px;"></div><svg class="i" style="left:114px;top:109px" width="16" height="16" viewBox="0 0 16 16"><circle cx="8" cy="8" r="7.200" fill="none" stroke="#404040" stroke-width="1"/><path d="M9 9L3.500 3.500" stroke="#000" fill="none" stroke-width="1.500"/><path d="M2.80 2.80L7.73 4.23L4.23 7.73Z" fill="#000"/></svg><svg class="i" style="left:137px;top:109px" width="16" height="16" viewBox="0 0 16 16"><path d="M2 3C6-.5 12 1 13.500 6c.5 3-1 6-2 7.500" fill="none" stroke="#505050" stroke-width="1"/><path d="M3 15.500l5-5-2-1.500 5-5" stroke="#000" fill="none" stroke-width="1.600"/><path d="M12.00 3.00L10.57 7.93L7.07 4.43Z" fill="#000"/></svg><svg class="i" style="left:160px;top:109px" width="16" height="16" viewBox="0 0 16 16"><circle cx="8" cy="8" r="7.200" fill="none" stroke="#404040" stroke-width="1"/><path d="M4 4l8 8" stroke="#000" fill="none" stroke-width="1.500"/><path d="M2.80 2.80L7.73 4.23L4.23 7.73ZM13.20 13.20L8.27 11.77L11.77 8.27Z" fill="#000"/></svg><svg class="i" style="left:183px;top:109px" width="16" height="16" viewBox="0 0 16 16"><path d="M0 15.250h16M.5 9.500L10 .5" stroke="#000" fill="none" stroke-width="1.500"/><path d="M8.500 3c3 2 5 6 5.500 11" stroke="#000" fill="none" stroke-width="1.200"/><path d="M8.00 2.50L12.27 3.24L9.66 6.51ZM14.00 15.00L11.54 11.43L15.70 11.01Z" fill="#000"/></svg><div class="sep" style="left:205px;top:108px;width:2px;height:19px;"></div><svg class="i" style="left:212px;top:109px" width="16" height="16" viewBox="0 0 16 16"><path d="M.75 0v16M15.250 0v16M1 3.500h14" stroke="#000" fill="none" stroke-width="1.500"/><path d="M1.20 3.50L4.70 1.57L4.70 5.43ZM14.80 3.50L11.30 5.43L11.30 1.57Z" fill="#000"/><path d="M5.500 1l3 0 3 5-1.500.5 3.500 7.500-7-6.500 2-.5z" fill="#E8E020" stroke="#686800" stroke-width=".8"/><path d="M5.500 1l6 11" stroke="#70A020" stroke-width=".8"/></svg><svg class="i" style="left:235px;top:109px" width="16" height="16" viewBox="0 0 16 16"><path d="M3.500 0v16M9.500 7v9M1 3.500h14M3.500 10.500h8" stroke="#000" fill="none" stroke-width="1.300"/><path d="M16.00 3.50L12.50 5.43L12.50 1.57ZM3.50 3.50L6.50 1.85L6.50 5.15ZM3.50 10.50L6.50 8.85L6.50 12.15ZM12.00 10.50L8.50 12.43L8.50 8.57Z" fill="#000"/></svg><svg class="i" style="left:258px;top:109px" width="16" height="16" viewBox="0 0 16 16"><path d="M1.500 0v16M8.500 0v16M15.250 0v16M1 4.500h15" stroke="#000" fill="none" stroke-width="1.300"/><path d="M2.00 4.50L5.00 2.85L5.00 6.15ZM8.00 4.50L5.00 6.15L5.00 2.85ZM9.00 4.50L12.00 2.85L12.00 6.15ZM15.00 4.50L12.00 6.15L12.00 2.85Z" fill="#000"/></svg><div class="sep" style="left:280px;top:108px;width:2px;height:19px;"></div><svg class="i" style="left:287px;top:109px" width="16" height="16" viewBox="0 0 16 16"><path d="M1 7.500L6 3.500h7" stroke="#000" fill="none" stroke-width="1.400"/><path d="M0.30 8.00L2.27 3.26L5.36 7.12Z" fill="#000"/><g transform="translate(1 2)"><path d="M5.500 1l3 0 3 5-1.500.5 3.500 7.500-7-6.500 2-.5z" fill="#E8E020" stroke="#686800" stroke-width=".8"/><path d="M5.500 1l6 11" stroke="#70A020" stroke-width=".8"/></g><text x="11" y="5" font-family="'Liberation Sans',sans-serif" font-weight="bold" font-size="6.500" fill="#0038A0">A</text></svg><svg class="i" style="left:310px;top:109px" width="16" height="16" viewBox="0 0 16 16"><rect x=".75" y="2.750" width="14.500" height="10.500" fill="#CCDCF4" stroke="#2C5CA8" stroke-width="1.300"/><path d="M8.500 3v10" stroke="#2C5CA8" stroke-width="1.100"/><rect x="9" y="3.500" width="6" height="9" fill="#E4ECFA"/><circle cx="4.500" cy="8" r="2.300" fill="none" stroke="#1C3C88" stroke-width=".9"/><path d="M4.500 4.500v7M1.500 8h6" stroke="#1C3C88" stroke-width=".9"/><path d="M10.500 11.500h1M13 5v6.500M12 6l1-1" stroke="#1C3C88" stroke-width="1.300" fill="none"/></svg><svg class="i" style="left:333px;top:109px" width="16" height="16" viewBox="0 0 16 16"><circle cx="8" cy="8" r="7.200" fill="none" stroke="#303030" stroke-width="1"/><path d="M4.500 8h7M8 4.500v7" stroke="#000" fill="none" stroke-width="2"/></svg><div class="sep" style="left:355px;top:108px;width:2px;height:19px;"></div><svg class="i" style="left:362px;top:109px" width="16" height="16" viewBox="0 0 16 16"><path d="M3 9.500L7 .5h2.500l4 9h-2.500l-1-2.500h-3.500l-1 2.500zM7 5.500h2.500l-1.250-3.200z" fill="#14489C" fill-rule="evenodd"/><path d="M1.5 9.5v6M14.5 9.5v6M2 12.5H14" stroke="#000" fill="none" stroke-width="1.200"/><path d="M2.00 12.50L5.50 10.57L5.50 14.43ZM14.00 12.50L10.50 14.43L10.50 10.57Z" fill="#000"/></svg><svg class="i" style="left:385px;top:109px" width="16" height="16" viewBox="0 0 16 16"><path d="M6.500 11.500L11.500 2l2.500 1.500-5 9.500-2.500.5z" fill="#E0A818" stroke="#80600C" stroke-width=".7"/><path d="M11.500 2l1-1.500 2.500 1.500-1 1.500z" fill="#F090B0" stroke="#C06080" stroke-width=".5"/><path d="M6.500 11.500l2 1-2.500 1z" fill="#402008"/><path d="M1.5 10v6M15.5 10v6M2 13H15" stroke="#000" fill="none" stroke-width="1.200"/><path d="M2.00 13.00L5.50 11.07L5.50 14.93ZM15.00 13.00L11.50 14.93L11.50 11.07Z" fill="#000"/></svg><svg class="i" style="left:408px;top:109px" width="16" height="16" viewBox="0 0 16 16"><path d="M3.500 1v9M14.500 1v9M4 3.500h10" fill="none" stroke="#2C64B0" stroke-width="1.300"/><path d="M4.00 3.50L7.50 1.57L7.50 5.43ZM14.00 3.50L10.50 5.43L10.50 1.57Z" fill="#2C64B0"/><path d="M1.500 5v11M12.500 5v11M2 8.500h10" stroke="#000" fill="none" stroke-width="1.400"/><path d="M2.00 8.50L5.50 6.57L5.50 10.43ZM12.00 8.50L8.50 10.43L8.50 6.57Z" fill="#000"/></svg><div class="sep" style="left:430px;top:108px;width:2px;height:19px;"></div><div class="cb" style="left:434px;top:106px;width:100px;height:22px;"></div><div class="cbb" style="left:517px;top:108px;width:15px;height:18px;"></div><svg class="a" style="left:517px;top:108px" width="15" height="18" viewBox="0 0 15 18"><path d="M3.500 6.500l4 4l4-4" fill="none" stroke="#4D6185" stroke-width="2.200"/></svg><span class="t" style="left:439px;top:110px;line-height:14px;font-family:'Liberation Sans',sans-serif;font-size:11px;font-weight:normal;letter-spacing:-0.372px;-webkit-text-stroke:.2px;">ISO-25</span><svg class="i" style="left:537px;top:109px" width="16" height="16" viewBox="0 0 16 16"><path d="M0.5 10v6M14.5 10v6M1 13H14" stroke="#000" fill="none" stroke-width="1.200"/><path d="M1.00 13.00L4.50 11.07L4.50 14.93ZM14.00 13.00L10.50 14.93L10.50 11.07Z" fill="#000"/><g transform="translate(0 -1)"><path d="M15 3L9.500 9.500" stroke="#C87840" stroke-width="2.600" stroke-linecap="round"/><path d="M14.500 2.500L12.500 5" stroke="#E8B890" stroke-width="1"/><path d="M10.500 8.500L8.500 10.500" stroke="#687080" stroke-width="2.800"/><path d="M9.300 9.500c-1.300-.3-3.300 1-6.300 4.300 3 .6 6-.5 7.800-2.500z" fill="#181818"/></g></svg><div style="left:0px;top:130px;width:1280px;height:1px;background:#ACA899"></div><div style="left:0px;top:130px;width:53px;height:760px;background:#ECE9D8"></div><div class="tbv" style="left:1px;top:130px;width:24px;height:434px;"></div><div class="gh" style="left:3px;top:132px;width:20px;height:3px;"></div><div class="gh" style="left:3px;top:136px;width:20px;height:3px;"></div><svg class="i" style="left:4px;top:144px" width="16" height="16" viewBox="0 0 16 16"><path d="M2.500 13.500L13.500 2.500" stroke="#000" fill="none" stroke-width="1.400"/><rect x="1" y="12" width="3" height="3" fill="#0078F0" stroke="#0048B0" stroke-width=".5"/><rect x="12" y="1" width="3" height="3" fill="#0078F0" stroke="#0048B0" stroke-width=".5"/></svg><svg class="i" style="left:4px;top:166px" width="16" height="16" viewBox="0 0 16 16"><path d="M2 14L14 2.500" stroke="#000" fill="none" stroke-width="1.500"/><path d="M0.30 15.60L1.86 10.71L5.27 14.30ZM15.70 0.80L14.14 5.69L10.73 2.10Z" fill="#000"/><rect x="7" y="6.5" width="3" height="3" fill="#0078F0" stroke="#0048B0" stroke-width=".5"/></svg><svg class="i" style="left:4px;top:188px" width="16" height="16" viewBox="0 0 16 16"><path d="M1.500 12h9M10.500 12c6.500 0 6.500-7 0-7" stroke="#000" fill="none" stroke-width="1.400"/><rect x="0" y="10.5" width="3" height="3" fill="#0078F0" stroke="#0048B0" stroke-width=".5"/><rect x="9" y="10.5" width="3" height="3" fill="#0078F0" stroke="#0048B0" stroke-width=".5"/><rect x="9" y="3.5" width="3" height="3" fill="#0078F0" stroke="#0048B0" stroke-width=".5"/></svg><svg class="i" style="left:4px;top:210px" width="16" height="16" viewBox="0 0 16 16"><path d="M8 1.500l6.500 5-2.500 7.500H4L1.500 6.500z" fill="url(#gb)" stroke="#101820" stroke-width="1.500"/></svg><svg class="i" style="left:4px;top:232px" width="16" height="16" viewBox="0 0 16 16"><rect x="1.500" y="5" width="13" height="7.500" fill="url(#gb)" stroke="#000" stroke-width="1.500"/><rect x="0" y="10.5" width="3" height="3" fill="#0078F0" stroke="#0048B0" stroke-width=".5"/><rect x="13" y="3" width="3" height="3" fill="#0078F0" stroke="#0048B0" stroke-width=".5"/></svg><svg class="i" style="left:4px;top:254px" width="16" height="16" viewBox="0 0 16 16"><path d="M1.500 14.500C2 8 6.500 2.500 14.500 1.500" fill="none" stroke="#303030" stroke-width="1.400"/><rect x="0" y="13" width="3" height="3" fill="#0078F0" stroke="#0048B0" stroke-width=".5"/><rect x="4.5" y="4.5" width="3" height="3" fill="#0078F0" stroke="#0048B0" stroke-width=".5"/><rect x="13" y="0" width="3" height="3" fill="#0078F0" stroke="#0048B0" stroke-width=".5"/></svg><svg class="i" style="left:4px;top:276px" width="16" height="16" viewBox="0 0 16 16"><circle cx="7.500" cy="8.500" r="7" fill="url(#gb)" stroke="#101010" stroke-width="1.500"/><path d="M7.500 8.500L12.500 3.500" stroke="#0060D0" stroke-width="1.400"/><rect x="6" y="7" width="3" height="3" fill="#0078F0" stroke="#0048B0" stroke-width=".5"/></svg><svg class="i" style="left:4px;top:298px" width="16" height="16" viewBox="0 0 16 16"><path d="M3 2.500c2-2 4.500-1 5 .5 2-2 6-.5 4.500 3 3 1 2.500 5-.5 5 .5 3-3.500 4.500-5.500 2C4 15 .5 12.500 2.500 10 0 8.500 .5 5.500 3 5.500 1.500 4.500 2 3 3 2.500z" fill="url(#gb)" stroke="#181818" stroke-width="1.500"/></svg><svg class="i" style="left:4px;top:320px" width="16" height="16" viewBox="0 0 16 16"><path d="M1 15C2 9 4 7.500 6.500 9s5 3 7-1.500c.8-2 1.200-4 1.500-6" fill="none" stroke="#303030" stroke-width="1.400"/></svg><svg class="i" style="left:4px;top:342px" width="16" height="16" viewBox="0 0 16 16"><ellipse cx="7.800" cy="9" rx="6.500" ry="4.500" fill="url(#gb)" stroke="#101010" stroke-width="1.500"/><rect x="0" y="7.5" width="3" height="3" fill="#0078F0" stroke="#0048B0" stroke-width=".5"/><rect x="12.5" y="7.5" width="3" height="3" fill="#0078F0" stroke="#0048B0" stroke-width=".5"/><rect x="6.2" y="3" width="3" height="3" fill="#0078F0" stroke="#0048B0" stroke-width=".5"/></svg><svg class="i" style="left:4px;top:364px" width="16" height="16" viewBox="0 0 16 16"><ellipse cx="8" cy="8" rx="6.800" ry="4.500" fill="url(#gb)"/><path d="M1.500 6C3 2 13 2.500 14.500 7c.8 3-3 5.500-7 5.500" fill="none" stroke="#202020" stroke-width="1.600"/><rect x="0" y="5" width="3" height="3" fill="#0078F0" stroke="#0048B0" stroke-width=".5"/><rect x="5.5" y="9.5" width="3" height="3" fill="#0078F0" stroke="#0048B0" stroke-width=".5"/></svg><svg class="i" style="left:4px;top:386px" width="16" height="16" viewBox="0 0 16 16"><path d="M6.500 .5h6l3.500 3.500v9h-9.500z" fill="url(#gb)" stroke="#B0C0D8" stroke-width=".8"/><rect x="1.500" y="4.500" width="8" height="6" fill="#E8E070" stroke="#2C5C9C" stroke-width="1.200"/><circle cx="9" cy="11.500" r="3.300" fill="#E8E070" stroke="#2C5C9C" stroke-width="1.200"/><rect x="0" y="9" width="3" height="3" fill="#0078F0" stroke="#0048B0" stroke-width=".5"/><path d="M16 12v4h-4z" fill="#000"/></svg><svg class="i" style="left:4px;top:408px" width="16" height="16" viewBox="0 0 16 16"><rect x="3.500" y="3.500" width="8" height="6" fill="#E8E070" stroke="#2C5C9C" stroke-width="1.200"/><circle cx="11" cy="11" r="3.300" fill="#E8E070" stroke="#2C5C9C" stroke-width="1.200"/><rect x="2" y="8" width="3" height="3" fill="#0078F0" stroke="#0048B0" stroke-width=".5"/></svg><svg class="i" style="left:4px;top:430px" width="16" height="16" viewBox="0 0 16 16"><rect x="7" y="6.5" width="3" height="3" fill="#0078F0" stroke="#0048B0" stroke-width=".5"/></svg><svg class="i" style="left:4px;top:452px" width="16" height="16" viewBox="0 0 16 16"><rect x="3.500" y="3.500" width="9.500" height="9" fill="#fff"/><path d="M3.500 6l6.500 6.500M3.500 9.500l3 3M6 3.500l7 7M9.500 3.500l3.500 3.500" stroke="#2C5C9C" stroke-width="1.300"/><path d="M3.500 0v16M13 0v16M0 3.500h16M0 12.500h16" stroke="#2C5C9C" stroke-width="1.700"/><path d="M11 16l5-8" stroke="#2C5C9C" stroke-width="1"/></svg><svg class="i" style="left:4px;top:474px" width="16" height="16" viewBox="0 0 16 16"><defs><linearGradient id="ggr" x1="0" y1="0" x2="1" y2="1"><stop offset="0" stop-color="#283C78"/><stop offset=".6" stop-color="#787850"/><stop offset="1" stop-color="#B0A840"/></linearGradient></defs><rect x="3.500" y="3.500" width="9.500" height="9" fill="url(#ggr)"/><path d="M3.500 0v16M13 0v16M0 3.500h16M0 12.500h16" stroke="#101828" stroke-width="1.700"/><path d="M8 14l7-9" stroke="#101828" stroke-width="1.400"/></svg><svg class="i" style="left:4px;top:496px" width="16" height="16" viewBox="0 0 16 16"><path d="M.75 2.750h10l4.500 4.500v6H.75z" fill="url(#gb)" stroke="#1C4C8C" stroke-width="1.500"/><circle cx="7" cy="8" r="2.800" fill="#F4F4EC" stroke="#2C5080" stroke-width="1.600"/></svg><svg class="i" style="left:4px;top:518px" width="16" height="16" viewBox="0 0 16 16"><rect x="1" y="1.500" width="14" height="12.500" fill="#5078C0"/><rect x="1" y="1.500" width="14" height="3" fill="#3060D0"/><path d="M1 1.700h14" stroke="#7098F0" stroke-width="1"/><rect x="2.0" y="5.3" width="3.400" height="2" fill="#F4F8FF"/><rect x="2.0" y="8.3" width="3.400" height="2" fill="#F4F8FF"/><rect x="2.0" y="11.3" width="3.400" height="2" fill="#F4F8FF"/><rect x="6.3" y="5.3" width="3.400" height="2" fill="#F4F8FF"/><rect x="6.3" y="8.3" width="3.400" height="2" fill="#F4F8FF"/><rect x="6.3" y="11.3" width="3.400" height="2" fill="#F4F8FF"/><rect x="10.6" y="5.3" width="3.400" height="2" fill="#F4F8FF"/><rect x="10.6" y="8.3" width="3.400" height="2" fill="#F4F8FF"/><rect x="10.6" y="11.3" width="3.400" height="2" fill="#F4F8FF"/><path d="M15.500 3v11.500H3" fill="none" stroke="#8090A8" stroke-width="1"/></svg><svg class="i" style="left:4px;top:540px" width="16" height="16" viewBox="0 0 16 16"><path d="M2.500 14L7.200 2h1.600l4.700 12M4.500 9.500h7" stroke="#000" stroke-width="1.700" fill="none"/></svg><div class="tbv" style="left:26px;top:130px;width:25px;height:391px;"></div><div class="gh" style="left:28px;top:132px;width:21px;height:3px;"></div><div class="gh" style="left:28px;top:136px;width:21px;height:3px;"></div><svg class="i" style="left:30px;top:144px" width="16" height="16" viewBox="0 0 16 16"><path d="M0 14.500h16" stroke="#202020" stroke-width="1"/><path d="M4.500 11.500L14.500 1.500l1.500 1.500v2L7.500 14z" fill="#E8B020" stroke="#A87810" stroke-width=".5"/><path d="M14.500 2L6 11" stroke="#F8E890" stroke-width="1"/><path d="M6.500 9.500l3 3-2.500 2-3-3z" fill="#E0F0F0" stroke="#50A8A0" stroke-width=".7"/><path d="M4.300 11.500l3 3c-1.500 1.500-3 1.500-4 .5s-.8-2.300 1-3.500z" fill="#E85858" stroke="#A83030" stroke-width=".6"/></svg><svg class="i" style="left:30px;top:166px" width="16" height="16" viewBox="0 0 16 16"><circle cx="3.5" cy="3.5" r="2.6" fill="url(#gb)" stroke="#282C38" stroke-width="1.200"/><circle cx="13" cy="12.5" r="3" fill="url(#gb)" stroke="#282C38" stroke-width="1.200"/><circle cx="9.5" cy="11" r="3" fill="url(#gb)" stroke="#282C38" stroke-width="1.200"/><path d="M6 2c3.500-1.500 7 0 7.500 4" fill="none" stroke="#1C4484" stroke-width="1.800"/><path d="M10.500 5.500h6l-3 3.500z" fill="#1C4484"/></svg><svg class="i" style="left:30px;top:188px" width="16" height="16" viewBox="0 0 16 16"><path d="M5.500 3v10.500H.75zM9.500 3v10.500h4.750z" fill="url(#gb)" stroke="#181C28" stroke-width="1.300"/><path d="M7.500 0v16" stroke="#0060E0" stroke-width="1.200"/></svg><svg class="i" style="left:30px;top:210px" width="16" height="16" viewBox="0 0 16 16"><path d="M16 14.500H3.500C0 14.500 0 9.500 3.500 9h1V5.500c0-5.500 8-5.500 8 0V9H16" fill="none" stroke="#181818" stroke-width="1.400"/><path d="M16 12H6.500c-2.500 0-2.500-1.500 0-1.500h1V7c0-3 3-3 3 0v3.500H16" fill="none" stroke="#0060E0" stroke-width="1.300"/></svg><svg class="i" style="left:30px;top:232px" width="16" height="16" viewBox="0 0 16 16"><rect x="0.75" y="0.75" width="5.500" height="5.500" fill="url(#gb)" stroke="#101010" stroke-width="1.500"/><rect x="0.75" y="9.75" width="5.500" height="5.500" fill="url(#gb)" stroke="#101010" stroke-width="1.500"/><rect x="9.75" y="0.75" width="5.500" height="5.500" fill="url(#gb)" stroke="#101010" stroke-width="1.500"/><rect x="9.75" y="9.75" width="5.500" height="5.500" fill="url(#gb)" stroke="#101010" stroke-width="1.500"/></svg><svg class="i" style="left:30px;top:254px" width="16" height="16" viewBox="0 0 16 16"><path d="M8 2.500v11M2.500 8h11" stroke="#3C6898" stroke-width="2"/><path d="M8 0l3 3.500H5zM8 16l3-3.500H5zM0 8l3.500-3v6zM16 8l-3.500-3v6z" fill="#3C6898"/></svg><svg class="i" style="left:30px;top:276px" width="16" height="16" viewBox="0 0 16 16"><path d="M6 3.500A5.800 5.800 0 1 0 11 3.200" fill="none" stroke="#3C6898" stroke-width="2"/><path d="M2 2l6.500-1.500L7 7z" fill="#3C6898"/></svg><svg class="i" style="left:30px;top:298px" width="16" height="16" viewBox="0 0 16 16"><rect x=".75" y=".75" width="14.500" height="14.500" fill="url(#gb)" stroke="#3C6CA8" stroke-width="1.500"/><rect x="0" y="6" width="9.500" height="10" fill="#ECE9D8"/><rect x=".75" y="6.750" width="8.500" height="8.500" fill="none" stroke="#000" stroke-width="1.500" stroke-dasharray="1.500 1.200"/></svg><svg class="i" style="left:30px;top:320px" width="16" height="16" viewBox="0 0 16 16"><path d="M7 .75h3l5.500 14.500H7z" fill="url(#gb)" stroke="#3C6CA8" stroke-width="1.400"/><path d="M5.500 .75H.75v14.500H5.500" fill="#F4F6F8" stroke="#000" stroke-width="1.500"/><path d="M5.500 1v14" stroke="#000" stroke-width="1.400" stroke-dasharray="1.400 1.200"/></svg><svg class="i" style="left:30px;top:342px" width="16" height="16" viewBox="0 0 16 16"><path d="M0 7.500h4.500" stroke="#000" stroke-width="1.500"/><path d="M3.500 14L10 1.500" stroke="#0060D0" stroke-width="1.300"/><path d="M8 7.500h8" stroke="#0060D0" stroke-width="1.300" stroke-dasharray="2.200 1.300"/></svg><svg class="i" style="left:30px;top:364px" width="16" height="16" viewBox="0 0 16 16"><path d="M0 7.500h5" stroke="#000" stroke-width="1.500"/><path d="M6 7.500h6" stroke="#0060D0" stroke-width="1.300" stroke-dasharray="2.200 1.300"/><path d="M10 14L16 2" stroke="#0060D0" stroke-width="1.300"/></svg><svg class="i" style="left:30px;top:386px" width="16" height="16" viewBox="0 0 16 16"><rect x=".75" y="2.750" width="14.500" height="10.500" fill="url(#gb)" stroke="#000" stroke-width="1.500"/><rect x="9" y="1.5" width="3" height="3" fill="#3C6CA8"/></svg><svg class="i" style="left:30px;top:408px" width="16" height="16" viewBox="0 0 16 16"><rect x=".75" y="2.750" width="14.500" height="10.500" fill="url(#gb)" stroke="#000" stroke-width="1.500"/><rect x="4.500" y="1.500" width="7" height="2.500" fill="#E8EEF6"/><rect x="2.5" y="1.5" width="3" height="3" fill="#3C6CA8"/><rect x="11" y="1.5" width="3" height="3" fill="#3C6CA8"/></svg><svg class="i" style="left:30px;top:430px" width="16" height="16" viewBox="0 0 16 16"><path d="M0 8h16" stroke="#000" stroke-width="1.800"/><path d="M4 4.500L8 8 4 11.500zM12 4.500L8 8l4 3.500z" fill="#2C5484"/></svg><svg class="i" style="left:30px;top:452px" width="16" height="16" viewBox="0 0 16 16"><path d="M.75 16V8M8 .75h8" stroke="#000" stroke-width="1.500"/><path d="M.75 8V.75H8" fill="none" stroke="#000" stroke-width="1.300" stroke-dasharray="1.200 1.200"/><path d="M.75 8L8 .75" stroke="#0060D0" stroke-width="1.500"/></svg><svg class="i" style="left:30px;top:474px" width="16" height="16" viewBox="0 0 16 16"><path d="M.75 16V9M9 .75h7" stroke="#000" stroke-width="1.500"/><path d="M.75 9V.75H9" fill="none" stroke="#000" stroke-width="1.300" stroke-dasharray="1.200 1.200"/><path d="M.75 9C1 4 4 1 9 .75" fill="none" stroke="#0060D0" stroke-width="1.700"/></svg><svg class="i" style="left:30px;top:496px" width="16" height="16" viewBox="0 0 16 16"><path d="M5 4l1.500 2.500L9 4.500l-.5 3 3 .5-2.500 1.500 2 2.500-3-.5-.5 3-1.500-2.500L3.500 14l.5-3-3-.5L3.500 9 1.500 6.500l3 .5z" fill="#F8C818" stroke="#E87808" stroke-width=".7"/><path d="M2.500 13.500L9 6.500" stroke="#D81818" stroke-width="3.200" stroke-linecap="round"/><path d="M2 12.500l5-5.500" stroke="#F87070" stroke-width="1"/><path d="M9 6.500l3-3" stroke="#202020" stroke-width="1.200"/><path d="M13 0v6M10 3h6M11 1l4 4M15 1l-4 4" stroke="#F4F8FF" stroke-width="1"/><path d="M13 1.500v3M11.500 3h3" stroke="#5888D0" stroke-width=".8"/><path d="M3.500 5l1 1M10 11l1 1M8 13.500l.5 1.500" stroke="#D81818" stroke-width="1.200"/></svg><div class="tbv" style="left:26px;top:522px;width:25px;height:105px;"></div><div class="gh" style="left:28px;top:524px;width:21px;height:3px;"></div><div class="gh" style="left:28px;top:528px;width:21px;height:3px;"></div><div style="left:27px;top:534px;width:22px;height:21px;background:#F6F5F0;border-radius:3px;border:1px solid #FBFAF7;border-right-color:#D4D1C2;border-bottom-color:#C9C6B6"></div><svg class="i" style="left:30px;top:536px" width="16" height="16" viewBox="0 0 16 16"><rect x="0.6" y="0.6" width="7" height="7" fill="url(#gb)" stroke="#4878B0" stroke-width="1.200"/><rect x="8.5" y="9" width="7" height="6.5" fill="url(#gb)" stroke="#4878B0" stroke-width="1.200"/><rect x="3.5" y="3.5" width="9.5" height="9.5" fill="#5C84B8" stroke="#3C68A4" stroke-width="1.200" fill-opacity=".92"/></svg><svg class="i" style="left:30px;top:558px" width="16" height="16" viewBox="0 0 16 16"><rect x="3.5" y="4" width="9.5" height="9.5" fill="#5C84B8" stroke="#3C68A4" stroke-width="1.200" fill-opacity=".92"/><rect x="0.6" y="0.6" width="7" height="6.5" fill="url(#gb)" stroke="#4878B0" stroke-width="1.200"/><rect x="8.5" y="9.5" width="7" height="6" fill="url(#gb)" stroke="#4878B0" stroke-width="1.200"/></svg><svg class="i" style="left:30px;top:580px" width="16" height="16" viewBox="0 0 16 16"><rect x="4" y="5" width="11.5" height="10" fill="url(#gb)" stroke="#4878B0" stroke-width="1.200"/><rect x="1" y="0.8" width="10" height="9.5" fill="#5C84B8" stroke="#3C68A4" stroke-width="1.200" fill-opacity=".92"/></svg><svg class="i" style="left:30px;top:602px" width="16" height="16" viewBox="0 0 16 16"><rect x="1" y="0.8" width="10" height="9.5" fill="#5C84B8" stroke="#3C68A4" stroke-width="1.200" fill-opacity=".92"/><rect x="4" y="5" width="11.5" height="10" fill="url(#gb)" stroke="#4878B0" stroke-width="1.200"/></svg><div style="left:53px;top:131px;width:1225px;height:757px;background:#fff;border-left:1px solid #716F64;border-top:1px solid #716F64"></div><div style="left:1278px;top:131px;width:2px;height:776px;background:#ECE9D8;border-left:1px solid #F8F7F2"></div><svg class="a" style="left:0;top:0" width="1280" height="1024" viewBox="0 0 1280 1024"><path d="M367 259.5H837M839 259.5H923M427.5 259V698M602.5 224V259M602 224.5H679M519 307.5H553M567 307.5H626M640 307.5H699M713 307.5H747M519 396.5H553M567 396.5H626M640 396.5H699M713 396.5H747M519.5 307V345M519.5 359V397M746.5 307V345M746.5 359V397M621.5 365.500H648.500V766.500H621.500ZM651 365.5H704M698.5 365V448M749 396.5H923M916.5 259V397M963.5 391V468M427 697.5H649M651 697.5H928M651 766.5H928M920.5 610V767" fill="none" stroke="#000" stroke-width="1" shape-rendering="crispEdges"/><path d="M595.5 249L602.500 259L609.500 249M917 328L963.500 391" fill="none" stroke="#000" stroke-width="1"/><path d="M421.0 253L434.5 266.5M421.0 691L434.5 704.5M910.0 253L923.5 266.5M910.0 390L923.5 403.5M692.0 359L705.5 372.5M692.0 390L705.5 403.5M914.0 691L927.5 704.5M914.0 760L927.5 773.5" fill="none" stroke="#000" stroke-width="2.200"/><text transform="translate(621.500 219) skewX(-20) scale(.74 1)" font-family="'Liberation Sans',sans-serif" font-weight="bold" font-size="20.500">0.000</text><text transform="translate(423 520) rotate(-90)" font-family="&quot;Liberation Sans&quot;,sans-serif" font-style="italic" font-size="21" textLength="83" lengthAdjust="spacingAndGlyphs" fill="#000" stroke="#fff" stroke-width="0.35">d=8,15 м</text><text transform="translate(695 447) rotate(-90)" font-family="&quot;Liberation Sans&quot;,sans-serif" font-style="italic" font-size="21" textLength="36" lengthAdjust="spacingAndGlyphs" fill="#000" stroke="#fff" stroke-width="0.35">0,05</text><text transform="translate(957 467) rotate(-90)" font-family="&quot;Liberation Sans&quot;,sans-serif" font-style="italic" font-size="21" textLength="72" lengthAdjust="spacingAndGlyphs" fill="#000" stroke="#fff" stroke-width="0.35">Hp=1,7м</text><text transform="translate(916 683) rotate(-90)" font-family="&quot;Liberation Sans&quot;,sans-serif" font-style="italic" font-size="21" textLength="69" lengthAdjust="spacingAndGlyphs" fill="#000" stroke="#fff" stroke-width="0.35">h=1,05м</text><path d="M75.5 782V807M75.500 809V866.500H127.500L75.500 782M75.500 853.500H88.500V866.500M101.500 853.500L114 866.500M114 853.500L101.500 866.500M75.500 809L82.500 814.500L88 809M82.500 814.500V821" fill="none" stroke="#0000FF" stroke-width="1"/><path d="M55.5 512V575M54 543.500H87M54.500 540.500H58.500V546.500H54.500Z" fill="none" stroke="#000" stroke-width="1" shape-rendering="crispEdges"/></svg><div style="left:49px;top:559px;width:99px;height:17px;background:#FFFFE1;border:1px solid #000"></div><span class="t" style="left:52px;top:561px;line-height:14px;font-family:'Liberation Sans',sans-serif;font-size:11px;font-weight:normal;letter-spacing:-0.106px;-webkit-text-stroke:.2px;">На передний план</span><div style="left:53px;top:888px;width:1225px;height:1px;background:#000"></div><div style="left:54px;top:889px;width:1224px;height:16px;background:#ECE9D8"></div><div style="left:55px;top:889px;width:18px;height:15px;background:#ECE9D8;border-left:1px solid #fff;border-top:1px solid #fff;border-right:1px solid #ACA899;border-bottom:1px solid #ACA899"></div><div style="left:73px;top:889px;width:18px;height:15px;background:#ECE9D8;border-left:1px solid #fff;border-top:1px solid #fff;border-right:1px solid #ACA899;border-bottom:1px solid #ACA899"></div><div style="left:91px;top:889px;width:18px;height:15px;background:#ECE9D8;border-left:1px solid #fff;border-top:1px solid #fff;border-right:1px solid #ACA899;border-bottom:1px solid #ACA899"></div><div style="left:109px;top:889px;width:18px;height:15px;background:#ECE9D8;border-left:1px solid #fff;border-top:1px solid #fff;border-right:1px solid #ACA899;border-bottom:1px solid #ACA899"></div><svg class="a" style="left:55px;top:889px" width="72" height="15" viewBox="0 0 72 15"><path d="M5 3.500h2v8h-2zM12.500 3.500v8l-4.500-4z" fill="#000"/><path d="M29.500 3.500v8l-4.500-4z" fill="#000"/><path d="M42.500 3.500v8l4.500-4z" fill="#000"/><path d="M59.500 3.500v8l4.500-4zM65 3.500h2v8h-2z" fill="#000"/></svg><svg class="a" style="left:127px;top:888px" width="110" height="17" viewBox="0 0 110 17"><path d="M2.500 0.500L6 15.500H52L55.500 3" fill="#ECE9D8" stroke="#000"/><path d="M53 0.500L57.500 15.500H96L100.500 0.500" fill="#fff" stroke="#000"/><path d="M53.500 0.500H100" stroke="#fff"/></svg><span class="t" style="left:137px;top:889px;line-height:14px;font-family:'Liberation Sans',sans-serif;font-size:11px;font-weight:normal;letter-spacing:-0.097px;-webkit-text-stroke:.2px;">Модель</span><span class="t" style="left:189px;top:889px;line-height:14px;font-family:'Liberation Sans',sans-serif;font-size:11px;font-weight:normal;letter-spacing:-0.258px;-webkit-text-stroke:.2px;">Лист1</span><div style="left:0px;top:904px;width:1280px;height:7px;background:#ECE9D8"></div><div style="left:0px;top:905px;width:1278px;height:2px;background:#fff"></div><div style="left:0px;top:911px;width:1280px;height:1px;background:#2A2A2A"></div><div style="left:0px;top:913px;width:1280px;height:56px;background:#ECE9D8"></div><div class="gr" style="left:6px;top:920px;width:3px;height:40px;"></div><div class="gr" style="left:10px;top:920px;width:3px;height:40px;"></div><div style="left:17px;top:922px;width:1256px;height:24px;background:#fff;border-left:1px solid #202020;border-top:1px solid #202020;border-right:1px solid #fff"></div><div style="left:17px;top:945px;width:1238px;height:20px;background:#fff;border-left:1px solid #202020;border-top:1px solid #808080;border-right:1px solid #fff;border-bottom:1px solid #fff"></div><div style="left:1255px;top:945px;width:18px;height:1px;background:#fff"></div><span class="t" style="left:19px;top:925px;line-height:15px;font-family:'Liberation Mono',monospace;font-size:12px;font-weight:normal;letter-spacing:0.629px;-webkit-text-stroke:.2px;">Точка вставки:</span><span class="t" style="left:19px;top:950px;line-height:15px;font-family:'Liberation Mono',monospace;font-size:12px;font-weight:normal;letter-spacing:0.484px;-webkit-text-stroke:.2px;">Команда:</span><div style="left:1257px;top:924px;width:13px;height:8px;background:linear-gradient(135deg,#D6E0FC,#B4C8F6);border-radius:2px;box-shadow:0 0 0 1px #fff,1px 1px 0 1px #9DB4E4"></div><div style="left:1257px;top:935px;width:13px;height:8px;background:linear-gradient(135deg,#D6E0FC,#B4C8F6);border-radius:2px;box-shadow:0 0 0 1px #fff,1px 1px 0 1px #9DB4E4"></div><svg class="a" style="left:1257px;top:924px" width="13" height="19" viewBox="0 0 13 19"><path d="M4 5.500l2.500-2.500l2.500 2.500M4 13.500l2.500 2.500l2.500-2.500" fill="none" stroke="#4D6185" stroke-width="1.600"/></svg><div style="left:1187px;top:946px;width:67px;height:18px;background:#F6F5F0"></div><div style="left:1190px;top:948px;width:14px;height:14px;background:linear-gradient(135deg,#D6E0FC,#B4C8F6);border-radius:2px;box-shadow:0 0 0 1px #fff,1px 1px 0 1px #9DB4E4"></div><div style="left:1206px;top:948px;width:14px;height:14px;background:linear-gradient(135deg,#D6E0FC,#B4C8F6);border-radius:2px;box-shadow:0 0 0 1px #fff,1px 1px 0 1px #9DB4E4"></div><div style="left:1238px;top:948px;width:14px;height:14px;background:linear-gradient(135deg,#D6E0FC,#B4C8F6);border-radius:2px;box-shadow:0 0 0 1px #fff,1px 1px 0 1px #9DB4E4"></div><svg class="a" style="left:1190px;top:948px" width="64" height="14" viewBox="0 0 64 14"><path d="M8.500 3.500l-3.500 3.500l3.500 3.500M53.500 3.500l3.500 3.500l-3.500 3.500" fill="none" stroke="#4D6185" stroke-width="2"/><path d="M20.500 4.500v5M22.500 4.500v5M24.500 4.500v5M26.500 4.500v5" stroke="#8CA3DA"/></svg><div style="left:0px;top:967px;width:1280px;height:1px;background:#fff"></div><div style="left:0px;top:966px;width:1280px;height:1px;background:#C9C6B6"></div><div style="left:0px;top:968px;width:1280px;height:21px;background:linear-gradient(#EFECDD,#ECE9D8 40%,#E3DFCB 90%,#DEDAC5)"></div><span class="t" style="left:7px;top:974px;line-height:14px;font-family:'Liberation Sans',sans-serif;font-size:11px;font-weight:normal;letter-spacing:-0.016px;-webkit-text-stroke:.2px;">Перенос выбранных объектов на передний план относительно всех:  ПОРЯДОК</span><div style="left:0px;top:989px;width:1280px;height:1px;background:#F3EDD6"></div><div style="left:0px;top:990px;width:1280px;height:34px;background:linear-gradient(to bottom,#2A6AD0 0px,#2A6AD0 1px,#3286E8 1.200px,#2E7EE2 4px,#2C6CD8 4.100px,#2C6CD8 5px,#4590E6 5.200px,#4590E6 6.800px,#3076E2 8px,#2660DA 9.500px,#2459D6 12px,#2459D6 20px,#2760DC 28px,#2763E0 31.500px,#1D4EBC 33.500px)"></div><div style="left:0px;top:994px;width:97px;height:30px;border-radius:0 12px 12px 0/0 15px 15px 0;background:linear-gradient(to bottom,#5EAC56 0px,#3C963C 3px,#388E38 8px,#3A973A 16px,#43A843 24px,#2F8A33 30px);box-shadow:inset 0 2px 2px rgba(255,255,255,.25),inset -2px -2px 3px rgba(0,60,0,.45),1px 0 1px #1B4FAE"></div><svg class="a" style="left:9px;top:999px" width="22" height="20" viewBox="0 0 20 18"><path d="M2.500 2.500Q5.500 0.500 9 2.500L8 8Q5 6.500 1.500 8z" fill="#F0562A"/><path d="M10.200 3Q13.500 5 17.500 3L16.500 8.500Q13 10.500 9.200 8.500z" fill="#86CC3C"/><path d="M1.200 9.300Q4.500 7.800 7.800 9.300L6.800 15Q3.800 13.500 0.200 15z" fill="#4B8CF0"/><path d="M9 9.800Q12.500 11.800 16.200 9.800L15.200 15.500Q12 17.500 8 15.500z" fill="#FCD32C"/></svg><span class="t" style="left:35px;top:998px;line-height:24px;font-family:'Liberation Sans',sans-serif;font-size:19px;font-weight:bold;font-style:italic;transform-origin:0 0;transform:scaleX(0.8732);color:#fff;text-shadow:1px 1px 1px #1F5A1F;">пуск</span><div style="left:105px;top:1000px;width:2px;height:2px;background:#0A2A9A;box-shadow:1px 1px 0 #1C9CF0"></div><div style="left:108px;top:1003px;width:2px;height:2px;background:#0A2A9A;box-shadow:1px 1px 0 #1C9CF0"></div><div style="left:105px;top:1006px;width:2px;height:2px;background:#0A2A9A;box-shadow:1px 1px 0 #1C9CF0"></div><div style="left:108px;top:1009px;width:2px;height:2px;background:#0A2A9A;box-shadow:1px 1px 0 #1C9CF0"></div><div style="left:105px;top:1012px;width:2px;height:2px;background:#0A2A9A;box-shadow:1px 1px 0 #1C9CF0"></div><div style="left:108px;top:1015px;width:2px;height:2px;background:#0A2A9A;box-shadow:1px 1px 0 #1C9CF0"></div><div style="left:105px;top:1018px;width:2px;height:2px;background:#0A2A9A;box-shadow:1px 1px 0 #1C9CF0"></div><div style="left:689px;top:1000px;width:2px;height:2px;background:#0A2A9A;box-shadow:1px 1px 0 #1C9CF0"></div><div style="left:692px;top:1003px;width:2px;height:2px;background:#0A2A9A;box-shadow:1px 1px 0 #1C9CF0"></div><div style="left:689px;top:1006px;width:2px;height:2px;background:#0A2A9A;box-shadow:1px 1px 0 #1C9CF0"></div><div style="left:692px;top:1009px;width:2px;height:2px;background:#0A2A9A;box-shadow:1px 1px 0 #1C9CF0"></div><div style="left:689px;top:1012px;width:2px;height:2px;background:#0A2A9A;box-shadow:1px 1px 0 #1C9CF0"></div><div style="left:692px;top:1015px;width:2px;height:2px;background:#0A2A9A;box-shadow:1px 1px 0 #1C9CF0"></div><div style="left:689px;top:1018px;width:2px;height:2px;background:#0A2A9A;box-shadow:1px 1px 0 #1C9CF0"></div><div style="left:1139px;top:1000px;width:2px;height:2px;background:#0A2A9A;box-shadow:1px 1px 0 #1C9CF0"></div><div style="left:1142px;top:1003px;width:2px;height:2px;background:#0A2A9A;box-shadow:1px 1px 0 #1C9CF0"></div><div style="left:1139px;top:1006px;width:2px;height:2px;background:#0A2A9A;box-shadow:1px 1px 0 #1C9CF0"></div><div style="left:1142px;top:1009px;width:2px;height:2px;background:#0A2A9A;box-shadow:1px 1px 0 #1C9CF0"></div><div style="left:1139px;top:1012px;width:2px;height:2px;background:#0A2A9A;box-shadow:1px 1px 0 #1C9CF0"></div><div style="left:1142px;top:1015px;width:2px;height:2px;background:#0A2A9A;box-shadow:1px 1px 0 #1C9CF0"></div><div style="left:1139px;top:1018px;width:2px;height:2px;background:#0A2A9A;box-shadow:1px 1px 0 #1C9CF0"></div><div class="tk" style="left:116px;top:997px;width:111px;height:25px;"></div><svg class="i" style="left:125px;top:1002px" width="16" height="16" viewBox="0 0 16 16"><path d="M.5 3.500q0-1 1-1h4l1.500 1.500h6q1 0 1 1v8q0 1-1 1h-11.500q-1 0-1-1z" fill="#E8C048" stroke="#A87818" stroke-width=".8"/><path d="M1 6.500h14l-1 7.500h-12.500z" fill="#F8E488" stroke="#C89828" stroke-width=".6"/></svg><span class="t" style="left:144px;top:1002px;line-height:14px;font-family:'Liberation Sans',sans-serif;font-size:11px;font-weight:normal;letter-spacing:-0.889px;color:#fff;-webkit-text-stroke:.2px;">ОСНОВАНИЯ</span><div class="tk" style="left:229px;top:997px;width:111px;height:25px;"></div><svg class="i" style="left:238px;top:1002px" width="16" height="16" viewBox="0 0 16 16"><path d="M.5 7L5 3.500h8L16 7v3l-3.500 2.500h-8L.5 10z" fill="#C8CCD4" stroke="#484C54" stroke-width=".8"/><path d="M1 7L5 4h8l2.500 3-3 2H4z" fill="#686C74"/><path d="M.5 7.500L4.500 9.800h8L16 7.500" fill="none" stroke="#F0F2F6" stroke-width="1"/><rect x="11" y="10.500" width="2" height="1" fill="#30C030"/></svg><span class="t" style="left:257px;top:1002px;line-height:14px;font-family:'Liberation Sans',sans-serif;font-size:11px;font-weight:normal;letter-spacing:-0.306px;color:#fff;-webkit-text-stroke:.2px;">GOODDRIV...</span><div class="tk" style="left:342px;top:997px;width:111px;height:25px;"></div><svg class="i" style="left:351px;top:1002px" width="16" height="16" viewBox="0 0 16 16"><path d="M4.500 .5h8l3 3v12h-11z" fill="#fff" stroke="#6078A0" stroke-width=".9"/><path d="M7 5h6M7 7h6M7 9h6M7 11h6M7 13h6" stroke="#A0B0D0" stroke-width=".8"/><rect x=".5" y="3.500" width="9" height="8" fill="#2C58B0" stroke="#E8F0FF" stroke-width=".8"/><path d="M2 5.500l1.200 4.500 1.500-4 1.500 4L7.700 5.500" fill="none" stroke="#fff" stroke-width="1.100"/></svg><span class="t" style="left:370px;top:1002px;line-height:14px;font-family:'Liberation Sans',sans-serif;font-size:11px;font-weight:normal;letter-spacing:0.234px;color:#fff;-webkit-text-stroke:.2px;">Эталон ПГ...</span><div class="tk" style="left:456px;top:997px;width:111px;height:25px;"></div><svg class="i" style="left:465px;top:1002px" width="16" height="16" viewBox="0 0 16 16"><path d="M4.500 .5h8l3 3v12h-11z" fill="#fff" stroke="#6078A0" stroke-width=".9"/><path d="M7 5h6M7 7h6M7 9h6M7 11h6M7 13h6" stroke="#A0B0D0" stroke-width=".8"/><rect x=".5" y="3.500" width="9" height="8" fill="#2C58B0" stroke="#E8F0FF" stroke-width=".8"/><path d="M2 5.500l1.200 4.500 1.500-4 1.500 4L7.700 5.500" fill="none" stroke="#fff" stroke-width="1.100"/></svg><span class="t" style="left:485px;top:1002px;line-height:14px;font-family:'Liberation Sans',sans-serif;font-size:11px;font-weight:normal;letter-spacing:0.270px;color:#fff;-webkit-text-stroke:.2px;">Документ ...</span><div class="tka" style="left:570px;top:997px;width:113px;height:25px;"></div><svg class="i" style="left:579px;top:1002px" width="16" height="16" viewBox="0 0 16 16"><rect x=".5" y=".5" width="15" height="15" fill="#1F8C6E" stroke="#fff"/><rect x="1" y="1" width="7" height="8.500" fill="#2FA58A"/><path d="M2.500 9L5 2.500l2.500 6.500M3.500 7h3" fill="none" stroke="#fff" stroke-width="1.300"/><path d="M10 1v14M1 10.500h14M13 1v14" stroke="#CFF0E6" stroke-width="1"/><rect x="9" y="9" width="4" height="4" fill="#1F8C6E" stroke="#fff"/><path d="M1.500 12.500h6" stroke="#fff"/></svg><span class="t" style="left:599px;top:1002px;line-height:14px;font-family:'Liberation Sans',sans-serif;font-size:11px;font-weight:normal;letter-spacing:0.072px;color:#fff;-webkit-text-stroke:.2px;">AutoCAD 2...</span><svg class="i" style="left:701px;top:1001px" width="16" height="16" viewBox="0 0 16 16"><defs><radialGradient id="bC8ECFF" cx=".35" cy=".3" r=".8"><stop offset="0" stop-color="#C8ECFF"/><stop offset=".6" stop-color="#48A0E8"/><stop offset="1" stop-color="#1C60C0"/></radialGradient></defs><circle cx="8" cy="8" r="8" fill="url(#bC8ECFF)"/><path d="M3 5.500l5 4 5-4-3.500 6.500-1.500 3-1.500-3z" fill="#18D018"/><circle cx="8" cy="4" r="2" fill="#fff"/><path d="M6.500 9.500h3L8 12z" fill="#E01818"/></svg><svg class="i" style="left:724px;top:1001px" width="16" height="16" viewBox="0 0 16 16"><path d="M8 .5L15.500 8 8 15.500.5 8z" fill="#E8E8E8" stroke="#303030" stroke-width="1"/><path d="M8 2.500L13.500 8 8 13.500 2.500 8z" fill="#484848"/><path d="M14 1.500l-9.500 6.500h4l-6 6.500 11-7.500h-4.500z" fill="#F8A020" stroke="#FCE4A0" stroke-width=".6"/></svg><svg class="i" style="left:747px;top:1001px" width="16" height="16" viewBox="0 0 16 16"><text x="7.500" y="14" text-anchor="middle" font-family="'Liberation Sans',sans-serif" font-weight="bold" font-style="italic" font-size="19" fill="#3C9CF4" stroke="#1C6CC8" stroke-width=".4">e</text><path d="M1 14C-1.500 11 7 1.500 14.500 1c1.500.5 1 2.500 0 4" fill="none" stroke="#7CC4FA" stroke-width="1.300"/></svg><svg class="i" style="left:770px;top:1001px" width="16" height="16" viewBox="0 0 16 16"><rect x=".5" y="1" width="14" height="14" rx="2" fill="#2868D0" stroke="#70A8F8" stroke-width=".8"/><path d="M3 3.500h7.500l1.500 1.500v7.500H3z" fill="#fff" stroke="#A0B8D8" stroke-width=".5"/><path d="M5 10l1-3 5.500-4 1.500 2-5.500 4z" fill="#F8F0D8" stroke="#303030" stroke-width=".7"/><path d="M12 3l3 .5-1.500 2z" fill="#E84818"/><path d="M4.500 12.500h5" stroke="#D8C060" stroke-width="1.200"/></svg><svg class="i" style="left:793px;top:1001px" width="16" height="16" viewBox="0 0 16 16"><path d="M7 0h1.500v3H7z" fill="#C0C0C0"/><rect x="5" y="2.500" width="6" height="13" fill="#A8ACA8" stroke="#E0E0E0" stroke-width=".8"/><rect x="6.500" y="4" width="3" height="4" fill="#20D020"/><rect x="6.500" y="9.500" width="3" height="4.500" fill="#18B018"/><rect x="0" y="7.500" width="4.500" height="5" fill="#A8ACA8" stroke="#E0E0E0" stroke-width=".6"/><rect x="11.500" y="7.500" width="4.500" height="5" fill="#A8ACA8" stroke="#E0E0E0" stroke-width=".6"/><text x=".5" y="12" font-family="'Liberation Sans',sans-serif" font-weight="bold" font-size="5" fill="#fff">q</text><text x="12.300" y="12" font-family="'Liberation Sans',sans-serif" font-weight="bold" font-size="5" fill="#fff">p</text></svg><svg class="i" style="left:816px;top:1001px" width="16" height="16" viewBox="0 0 16 16"><ellipse cx="8" cy="3.600" rx="2.300" ry="3.400" fill="#30D030" stroke="#0C780C" stroke-width=".5" transform="rotate(0 8 8)"/><ellipse cx="8" cy="3.600" rx="2.300" ry="3.400" fill="#30D030" stroke="#0C780C" stroke-width=".5" transform="rotate(45 8 8)"/><ellipse cx="8" cy="3.600" rx="2.300" ry="3.400" fill="#30D030" stroke="#0C780C" stroke-width=".5" transform="rotate(90 8 8)"/><ellipse cx="8" cy="3.600" rx="2.300" ry="3.400" fill="#30D030" stroke="#0C780C" stroke-width=".5" transform="rotate(135 8 8)"/><ellipse cx="8" cy="3.600" rx="2.300" ry="3.400" fill="#30D030" stroke="#0C780C" stroke-width=".5" transform="rotate(180 8 8)"/><ellipse cx="8" cy="3.600" rx="2.300" ry="3.400" fill="#30D030" stroke="#0C780C" stroke-width=".5" transform="rotate(270 8 8)"/><ellipse cx="8" cy="3.600" rx="2.300" ry="3.400" fill="#30D030" stroke="#0C780C" stroke-width=".5" transform="rotate(315 8 8)"/><ellipse cx="8" cy="3.600" rx="2.300" ry="3.400" fill="#E82020" stroke="#0C780C" stroke-width=".5" transform="rotate(225 8 8)"/><circle cx="8" cy="8" r="1.800" fill="#F8E020"/></svg><svg class="i" style="left:839px;top:1001px" width="16" height="16" viewBox="0 0 16 16"><path d="M7 0h1.500v2.500H7z" fill="#C8A800"/><rect x="4.500" y="2" width="7" height="13.500" rx="1" fill="#F0D020" stroke="#786000" stroke-width=".8"/><rect x="0" y="7" width="5" height="6" fill="#F0D020" stroke="#786000" stroke-width=".8"/><rect x="11" y="7" width="5" height="6" fill="#F0D020" stroke="#786000" stroke-width=".8"/><circle cx="8" cy="5" r="1.500" fill="#fff" stroke="#786000" stroke-width=".7"/><text x=".800" y="12" font-family="'Liberation Sans',sans-serif" font-weight="bold" font-size="5.500" fill="#403000">q</text><text x="6.800" y="12.500" font-family="'Liberation Sans',sans-serif" font-weight="bold" font-size="5.500" fill="#403000">i</text><text x="11.800" y="12" font-family="'Liberation Sans',sans-serif" font-weight="bold" font-size="5.500" fill="#403000">p</text></svg><svg class="i" style="left:862px;top:1001px" width="16" height="16" viewBox="0 0 16 16"><circle cx="8" cy="8" r="7.800" fill="#fff"/><circle cx="8" cy="8" r="6.800" fill="#189848"/><path d="M5 4v5.500c0 2.500 4.500 2.500 4.500 0V4M9.500 9.500c0 2 1 2.500 2.500 2M5 9v5" fill="none" stroke="#fff" stroke-width="1.700"/></svg><svg class="i" style="left:885px;top:1001px" width="16" height="16" viewBox="0 0 16 16"><text x="8" y="14" text-anchor="middle" font-family="'Liberation Sans',sans-serif" font-weight="bold" font-size="18" fill="#F89038">@</text></svg><svg class="i" style="left:909px;top:1001px" width="16" height="16" viewBox="0 0 16 16"><circle cx="8" cy="8" r="7.500" fill="#3C88E0"/><path d="M8 8L8 .5A7.500 7.500 0 0 1 15.500 8z" fill="#40B840"/><path d="M8 8h7.500A7.500 7.500 0 0 1 8 15.500z" fill="#F8B018"/><path d="M8 8v7.500A7.500 7.500 0 0 1 .5 8z" fill="#E85020"/><circle cx="8" cy="8" r="4.800" fill="#F4F8FF"/><path d="M6.500 5l5 3-5 3z" fill="#202838"/></svg><svg class="i" style="left:932px;top:1001px" width="16" height="16" viewBox="0 0 16 16"><defs><radialGradient id="b78C0F8" cx=".35" cy=".3" r=".8"><stop offset="0" stop-color="#78C0F8"/><stop offset=".6" stop-color="#2C70D0"/><stop offset="1" stop-color="#143C90"/></radialGradient></defs><circle cx="8" cy="8" r="6.5" fill="url(#b78C0F8)"/><path d="M1.500 3C.5 6 0 12 4.500 14.500 9 17 15 14 15.500 9c.3-3-1-5-2-6 .5 2 0 3.500-1 4.500-1.500 1.500-4 1-4-1 0-1.500-1.500-1-2.500-1.500C5 4 5.500 2.500 6.500 2 4.500 2 3.500 3 3 4 2 3.500 1.500 3 1.500 3z" fill="#F08018" stroke="#C85008" stroke-width=".5"/><path d="M3 4c1 2 2.500 2 3.500 2.500" fill="none" stroke="#F8D048" stroke-width="1"/></svg><svg class="i" style="left:955px;top:1001px" width="16" height="16" viewBox="0 0 16 16"><path d="M9 4.500h7M9 6.500h7M9 8.500h7M9 10.500h7M9 12.500h6" stroke="#101010" stroke-width="1.100"/><circle cx="6.500" cy="8.500" r="6" fill="#F8F8F8" stroke="#181818" stroke-width="1"/><path d="M3.500 8.500a3 3 0 1 1 3 3" fill="none" stroke="#E01020" stroke-width="2.200"/><path d="M3.500 11.500l3.500-2v4z" fill="#E01020"/></svg><svg class="i" style="left:978px;top:1001px" width="16" height="16" viewBox="0 0 16 16"><circle cx="8" cy="8" r="7.500" fill="#E03828"/><path d="M8 8L1.500 4.200A7.500 7.500 0 0 0 8 15.500l3.500-6z" fill="#30A848"/><path d="M8 8l3.500 1.500L8 15.500A7.500 7.500 0 0 0 14.800 5H8z" fill="#F8C818"/><circle cx="8" cy="8" r="3.400" fill="#F4F8FF"/><circle cx="8" cy="8" r="2.600" fill="#4890E8"/></svg><svg class="i" style="left:1001px;top:1001px" width="16" height="16" viewBox="0 0 16 16"><ellipse cx="8" cy="8" rx="7" ry="7.800" fill="#E01828"/><ellipse cx="8" cy="8" rx="2.800" ry="5.500" fill="#2C68D8"/><path d="M4 2.500c2-1.500 4-1.500 6 0" fill="none" stroke="#F88088" stroke-width="1"/></svg><svg class="i" style="left:1024px;top:1001px" width="16" height="16" viewBox="0 0 16 16"><path d="M3 2l9-1.500v14l-9 1z" fill="#B8D0F0" stroke="#5880C0" stroke-width=".8"/><path d="M4.500 3.500l6-.8v2.500l-6 .8z" fill="#E8F0FF" stroke="#6890D0" stroke-width=".5"/><rect x="4.5" y="7.5" width="1.400" height="1.400" fill="#5880C8"/><rect x="4.5" y="9.7" width="1.400" height="1.400" fill="#5880C8"/><rect x="4.5" y="11.9" width="1.400" height="1.400" fill="#5880C8"/><rect x="6.7" y="7.5" width="1.400" height="1.400" fill="#5880C8"/><rect x="6.7" y="9.7" width="1.400" height="1.400" fill="#5880C8"/><rect x="6.7" y="11.9" width="1.400" height="1.400" fill="#5880C8"/><rect x="8.9" y="7.5" width="1.400" height="1.400" fill="#5880C8"/><rect x="8.9" y="9.7" width="1.400" height="1.400" fill="#5880C8"/><rect x="8.9" y="11.9" width="1.400" height="1.400" fill="#5880C8"/><rect x="9" y="7" width="1.800" height="1.500" fill="#F09030"/></svg><svg class="i" style="left:1047px;top:1001px" width="16" height="16" viewBox="0 0 16 16"><path d="M2.500 .5h8l3 3v12h-11z" fill="#fff" stroke="#A8B0C0" stroke-width=".8"/><path d="M10.500 .5v3h3" fill="#D8E0EC" stroke="#A8B0C0" stroke-width=".6"/><circle cx="8" cy="9" r="3.800" fill="#2C70D0"/><path d="M4.200 8c0 5 7 6 7.800 1 .2-1.500-.5-2.500-1-3 0 2-1.500 3-3 2-1-.6-.5-1.500-1.500-2-1 0-1.800.5-2.300 2z" fill="#F08018"/></svg><svg class="i" style="left:1070px;top:1001px" width="16" height="16" viewBox="0 0 16 16"><circle cx="8" cy="8" r="7.300" fill="none" stroke="#1C58A8" stroke-width="1.600"/><circle cx="8" cy="8" r="5" fill="none" stroke="#3C88D8" stroke-width="1.800"/><circle cx="8" cy="8" r="2.200" fill="none" stroke="#1C58A8" stroke-width="1.400"/><path d="M13 8c0 3 2.500 3 2.500 0" fill="none" stroke="#1C58A8" stroke-width="1.400"/></svg><svg class="i" style="left:1093px;top:1001px" width="16" height="16" viewBox="0 0 16 16"><circle cx="8" cy="8" r="7.500" fill="#F09820"/><path d="M1 5.500C3 1 9 -1 13.500 3L2 10.500C.8 9 .5 7 1 5.500z" fill="#78C838"/><path d="M2.500 13L15 6.500c.8 2.500.3 4.500-.8 6z" fill="#38A838"/><path d="M3.500 14l10.500-2c-2.500 4-7.500 4.500-10.500 2z" fill="#F8C030"/></svg><svg class="a" style="left:1123px;top:1000px" width="10" height="7" viewBox="0 0 10 7"><path d="M1 1l2.500 2.500l-2.500 2.500M5 1l2.500 2.500l-2.500 2.500" fill="none" stroke="#A8D0F8" stroke-width="1.500"/></svg><div style="left:1151px;top:1000px;width:18px;height:17px;background:#3E6FD9"></div><span class="t" style="left:1153px;top:1001px;line-height:14px;font-family:'Liberation Sans',sans-serif;font-size:11px;font-weight:normal;letter-spacing:-2.891px;color:#fff;-webkit-text-stroke:.2px;">RU</span><div style="left:1188px;top:994px;width:92px;height:30px;background:linear-gradient(to bottom,#1A8FE8 0px,#2FA6F5 2px,#19A0F1 5px,#1290E8 10px,#118BE4 22px,#1080D8 27px,#0C63B5 30px);border-left:1px solid #0E3E9A;box-shadow:inset 1px 0 0 #3CB4FA"></div><div style="left:1178px;top:999px;width:19px;height:19px;border-radius:10px;background:radial-gradient(circle at 35% 30%,#7DB4FA,#2C6BE6 60%,#1D4FC4);border:1px solid #BFD8FF"></div><svg class="a" style="left:1178px;top:999px" width="19" height="19" viewBox="0 0 19 19"><path d="M11 5.500l-4 4l4 4" fill="none" stroke="#fff" stroke-width="2.200"/></svg><svg class="i" style="left:1197px;top:1001px" width="16" height="16" viewBox="0 0 16 16"><defs><radialGradient id="bFFD890" cx=".35" cy=".3" r=".8"><stop offset="0" stop-color="#FFD890"/><stop offset=".6" stop-color="#F08820"/><stop offset="1" stop-color="#D05808"/></radialGradient></defs><circle cx="8" cy="8" r="8" fill="url(#bFFD890)"/><path d="M4 5.500c2-3 7-2.500 7 .5 0 2.500-5 3-6 6h7.500" fill="none" stroke="#fff" stroke-width="1.800"/><circle cx="4.500" cy="12" r="4" fill="#58B028" stroke="#E8F8D8" stroke-width=".6"/><path d="M4.500 9.500v3M4.500 13.800v1" stroke="#fff" stroke-width="1.400"/></svg><svg class="i" style="left:1214px;top:1002px" width="16" height="16" viewBox="0 0 16 16"><rect x="1" y="2.500" width="9.500" height="8" fill="#283878" stroke="#A8B8D8" stroke-width="1"/><rect x="2.500" y="4" width="6.500" height="5" fill="#182050"/><path d="M3.500 12.500h5l1.500 2.500h-8z" fill="#C8D0E0"/></svg><svg class="i" style="left:1224px;top:999px" width="16" height="16" viewBox="0 0 16 16"><path d="M1.500 5.500c1 1 1 3 0 4M3.500 4c2 2 2 5 0 7M5.500 2.500c3 3 3 7 0 10" fill="none" stroke="#58D838" stroke-width="1.200"/></svg><span class="t" style="left:1239px;top:1002px;line-height:14px;font-family:'Liberation Sans',sans-serif;font-size:11px;font-weight:normal;letter-spacing:-0.133px;color:#fff;-webkit-text-stroke:.2px;">15:54</span></body></html>
